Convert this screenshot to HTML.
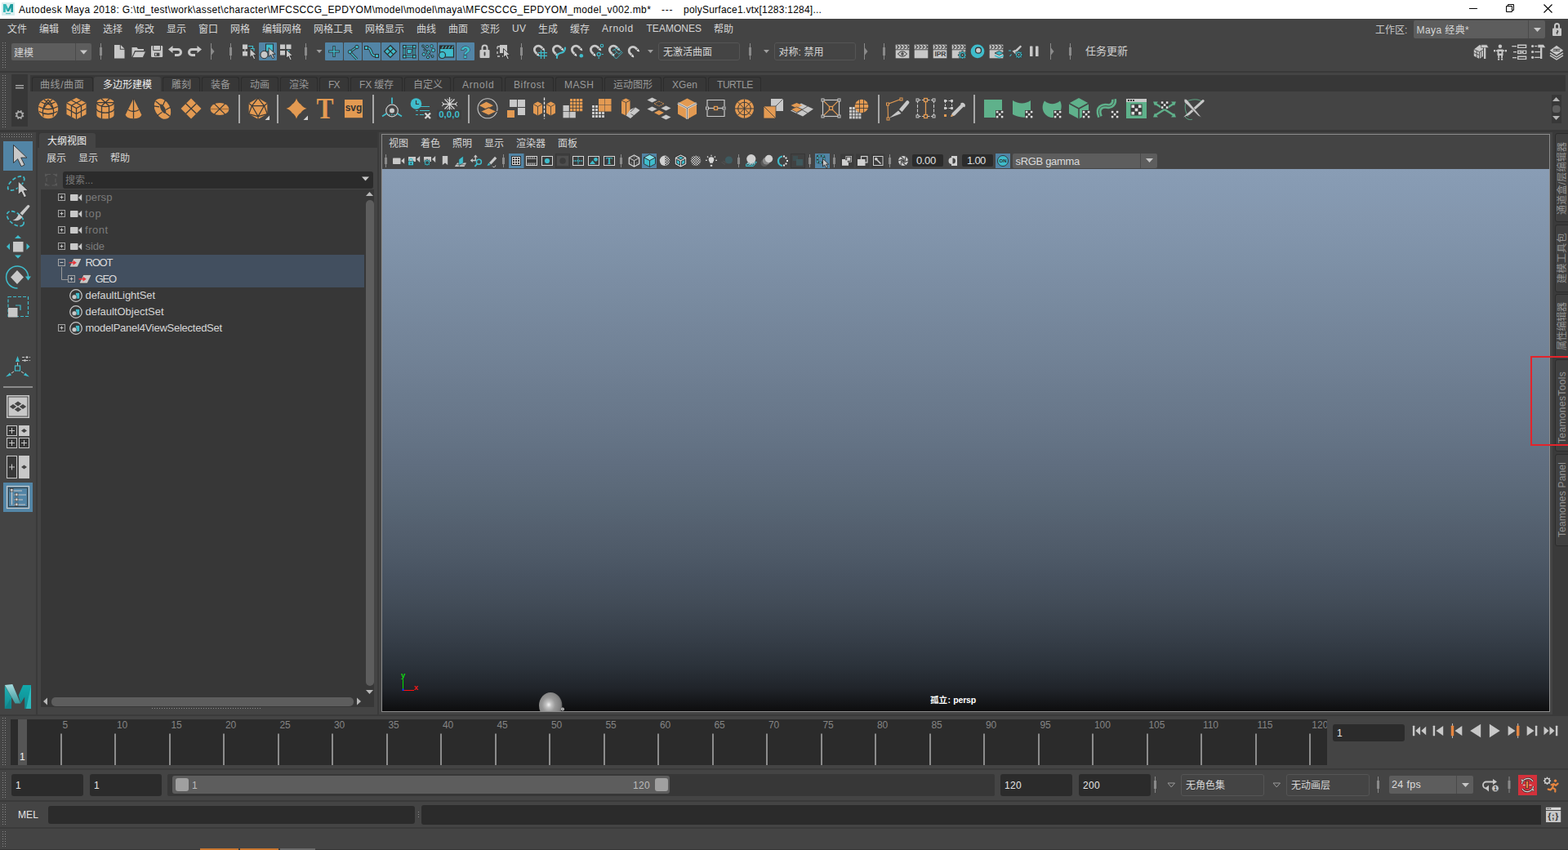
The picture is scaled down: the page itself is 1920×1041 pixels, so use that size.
<!DOCTYPE html>
<html lang="zh-CN"><head><meta charset="utf-8"><title>Autodesk Maya 2018</title>
<style>
html,body{margin:0;padding:0;}
body{width:1920px;height:1041px;overflow:hidden;position:relative;background:#444;font-family:"Liberation Sans","Noto Sans CJK SC",sans-serif;font-size:12px;color:#ddd;}
#ui div{position:absolute;white-space:nowrap;box-sizing:border-box;}
#ui{position:absolute;left:0;top:0;width:1920px;height:1041px;overflow:hidden;}
#ov{position:absolute;left:0;top:0;width:1920px;height:1041px;pointer-events:none;}
#ov text{font-family:"Liberation Sans","Noto Sans CJK SC",sans-serif;}
</style></head><body>
<div id="ui">
<div style="left:0px;top:0px;width:1920px;height:23px;background:#ffffff;"></div>
<div style="left:23px;top:3px;height:18px;line-height:18px;font-size:12px;font-weight:normal;color:#000;letter-spacing:0.371px;">Autodesk Maya 2018: G:\td_test\work\asset\character\MFCSCCG_EPDYOM\model\model\maya\MFCSCCG_EPDYOM_model_v002.mb*</div>
<div style="left:810px;top:3px;height:18px;line-height:18px;font-size:12px;font-weight:normal;color:#000;letter-spacing:0.800px;">---</div>
<div style="left:837px;top:3px;height:18px;line-height:18px;font-size:12px;font-weight:normal;color:#000;letter-spacing:0.234px;">polySurface1.vtx[1283:1284]...</div>
<div style="left:0px;top:23px;width:1920px;height:23px;background:#444444;"></div>
<div style="left:9px;top:27px;height:18px;line-height:18px;font-size:12px;color:#d6d6d6;">文件</div>
<div style="left:48px;top:27px;height:18px;line-height:18px;font-size:12px;color:#d6d6d6;">编辑</div>
<div style="left:87px;top:27px;height:18px;line-height:18px;font-size:12px;color:#d6d6d6;">创建</div>
<div style="left:126px;top:27px;height:18px;line-height:18px;font-size:12px;color:#d6d6d6;">选择</div>
<div style="left:165px;top:27px;height:18px;line-height:18px;font-size:12px;color:#d6d6d6;">修改</div>
<div style="left:204px;top:27px;height:18px;line-height:18px;font-size:12px;color:#d6d6d6;">显示</div>
<div style="left:243px;top:27px;height:18px;line-height:18px;font-size:12px;color:#d6d6d6;">窗口</div>
<div style="left:282px;top:27px;height:18px;line-height:18px;font-size:12px;color:#d6d6d6;">网格</div>
<div style="left:321px;top:27px;height:18px;line-height:18px;font-size:12px;color:#d6d6d6;">编辑网格</div>
<div style="left:384px;top:27px;height:18px;line-height:18px;font-size:12px;color:#d6d6d6;">网格工具</div>
<div style="left:447px;top:27px;height:18px;line-height:18px;font-size:12px;color:#d6d6d6;">网格显示</div>
<div style="left:510px;top:27px;height:18px;line-height:18px;font-size:12px;color:#d6d6d6;">曲线</div>
<div style="left:549px;top:27px;height:18px;line-height:18px;font-size:12px;color:#d6d6d6;">曲面</div>
<div style="left:588px;top:27px;height:18px;line-height:18px;font-size:12px;color:#d6d6d6;">变形</div>
<div style="left:627px;top:26px;height:18px;line-height:18px;font-size:12px;font-weight:normal;color:#d6d6d6;letter-spacing:0.219px;">UV</div>
<div style="left:659px;top:27px;height:18px;line-height:18px;font-size:12px;color:#d6d6d6;">生成</div>
<div style="left:698px;top:27px;height:18px;line-height:18px;font-size:12px;color:#d6d6d6;">缓存</div>
<div style="left:737px;top:26px;height:18px;line-height:18px;font-size:12px;font-weight:normal;color:#d6d6d6;letter-spacing:0.693px;">Arnold</div>
<div style="left:791.5px;top:26px;height:18px;line-height:18px;font-size:12px;font-weight:normal;color:#d6d6d6;letter-spacing:0.021px;">TEAMONES</div>
<div style="left:874px;top:27px;height:18px;line-height:18px;font-size:12px;color:#d6d6d6;">帮助</div>
<div style="left:1684px;top:28px;height:18px;line-height:18px;font-size:12px;color:#c8c8c8;">工作区:</div>
<div style="left:1731px;top:25px;width:161px;height:22px;background:#5d5d5d;border-radius:2px;"></div>
<div style="left:1871px;top:25px;width:1px;height:22px;background:#4a4a4a;"></div>
<div style="left:1734.5px;top:28px;height:18px;line-height:18px;font-size:12px;font-weight:normal;color:#d6d6d6;letter-spacing:0.419px;">Maya 经典*</div>
<div style="left:0px;top:87px;width:1920px;height:2px;background:#383838;"></div>
<div style="left:0px;top:159px;width:1920px;height:3px;background:#383838;"></div>
<div style="left:0px;top:875px;width:1920px;height:2px;background:#3a3a3a;"></div>
<div style="left:467px;top:164px;width:1431px;height:708px;background:#444;border:1px solid #8c8c8c;"></div>
<div style="left:468px;top:207px;width:1429px;height:664px;background:#000;background:linear-gradient(to bottom,rgb(137,157,181) 0.00%,rgb(134,154,178) 4.17%,rgb(132,151,174) 8.33%,rgb(129,148,171) 12.50%,rgb(126,145,167) 16.67%,rgb(123,141,163) 20.83%,rgb(120,138,159) 25.00%,rgb(117,134,155) 29.17%,rgb(114,131,151) 33.33%,rgb(111,127,147) 37.50%,rgb(107,123,142) 41.67%,rgb(104,119,138) 45.83%,rgb(100,115,133) 50.00%,rgb(96,110,128) 54.17%,rgb(92,106,122) 58.33%,rgb(87,101,116) 62.50%,rgb(83,95,110) 66.67%,rgb(78,90,104) 70.83%,rgb(72,83,97) 75.00%,rgb(67,77,89) 79.17%,rgb(60,69,80) 83.33%,rgb(52,60,70) 87.50%,rgb(43,50,58) 91.67%,rgb(32,36,42) 95.83%,rgb(13,13,14) 100.00%);"></div>
<div style="left:14px;top:53px;width:98px;height:21px;background:#5d5d5d;border-radius:2px;"></div>
<div style="left:92px;top:53px;width:1px;height:21px;background:#4a4a4a;"></div>
<div style="left:17px;top:56px;height:18px;line-height:18px;font-size:12px;color:#d2d2d2;">建模</div>
<div style="left:806px;top:52px;width:100px;height:22px;background:#444;border:1px solid #555;border-radius:3px;"></div>
<div style="left:812px;top:55px;height:18px;line-height:18px;font-size:12px;color:#d6d6d6;">无激活曲面</div>
<div style="left:948px;top:52px;width:100px;height:22px;background:#444;border:1px solid #555;border-radius:3px;"></div>
<div style="left:953.5px;top:55px;height:18px;line-height:18px;font-size:12px;font-weight:normal;color:#d6d6d6;letter-spacing:0.060px;">对称: 禁用</div>
<div style="left:1329px;top:54px;height:18px;line-height:18px;font-size:13px;color:#d0d0d0;">任务更新</div>
<div style="left:14px;top:91px;width:20px;height:64px;background:#373737;"></div>
<div style="left:37px;top:92px;width:1880px;height:20px;background:#373737;"></div>
<div style="left:39px;top:94px;width:75px;height:18px;background:#373737;border:1px solid #2c2c2c;border-bottom:none;border-radius:3px 3px 0 0;"></div>
<div style="left:115px;top:94px;width:82px;height:18px;background:#444444;border-radius:3px 3px 0 0;"></div>
<div style="left:199px;top:94px;width:46px;height:18px;background:#373737;border:1px solid #2c2c2c;border-bottom:none;border-radius:3px 3px 0 0;"></div>
<div style="left:247px;top:94px;width:46px;height:18px;background:#373737;border:1px solid #2c2c2c;border-bottom:none;border-radius:3px 3px 0 0;"></div>
<div style="left:295px;top:94px;width:46px;height:18px;background:#373737;border:1px solid #2c2c2c;border-bottom:none;border-radius:3px 3px 0 0;"></div>
<div style="left:343px;top:94px;width:46px;height:18px;background:#373737;border:1px solid #2c2c2c;border-bottom:none;border-radius:3px 3px 0 0;"></div>
<div style="left:391px;top:94px;width:36px;height:18px;background:#373737;border:1px solid #2c2c2c;border-bottom:none;border-radius:3px 3px 0 0;"></div>
<div style="left:429px;top:94px;width:64px;height:18px;background:#373737;border:1px solid #2c2c2c;border-bottom:none;border-radius:3px 3px 0 0;"></div>
<div style="left:495px;top:94px;width:57px;height:18px;background:#373737;border:1px solid #2c2c2c;border-bottom:none;border-radius:3px 3px 0 0;"></div>
<div style="left:555px;top:94px;width:60px;height:18px;background:#373737;border:1px solid #2c2c2c;border-bottom:none;border-radius:3px 3px 0 0;"></div>
<div style="left:618px;top:94px;width:60px;height:18px;background:#373737;border:1px solid #2c2c2c;border-bottom:none;border-radius:3px 3px 0 0;"></div>
<div style="left:680px;top:94px;width:58px;height:18px;background:#373737;border:1px solid #2c2c2c;border-bottom:none;border-radius:3px 3px 0 0;"></div>
<div style="left:740px;top:94px;width:70px;height:18px;background:#373737;border:1px solid #2c2c2c;border-bottom:none;border-radius:3px 3px 0 0;"></div>
<div style="left:812px;top:94px;width:53px;height:18px;background:#373737;border:1px solid #2c2c2c;border-bottom:none;border-radius:3px 3px 0 0;"></div>
<div style="left:867px;top:94px;width:65px;height:18px;background:#373737;border:1px solid #2c2c2c;border-bottom:none;border-radius:3px 3px 0 0;"></div>
<div style="left:49px;top:95px;height:18px;line-height:18px;font-size:12px;font-weight:normal;color:#9a9a9a;letter-spacing:0.590px;">曲线/曲面</div>
<div style="left:126px;top:95px;height:18px;line-height:18px;font-size:12px;font-weight:normal;color:#eeeeee;letter-spacing:-0.003px;">多边形建模</div>
<div style="left:210px;top:95px;height:18px;line-height:18px;font-size:12px;font-weight:normal;color:#9a9a9a;letter-spacing:-0.010px;">雕刻</div>
<div style="left:258px;top:95px;height:18px;line-height:18px;font-size:12px;font-weight:normal;color:#9a9a9a;letter-spacing:-0.010px;">装备</div>
<div style="left:306px;top:95px;height:18px;line-height:18px;font-size:12px;font-weight:normal;color:#9a9a9a;letter-spacing:-0.010px;">动画</div>
<div style="left:354px;top:95px;height:18px;line-height:18px;font-size:12px;font-weight:normal;color:#9a9a9a;letter-spacing:-0.010px;">渲染</div>
<div style="left:402px;top:95px;height:18px;line-height:18px;font-size:12px;font-weight:normal;color:#9a9a9a;letter-spacing:-0.896px;">FX</div>
<div style="left:440px;top:95px;height:18px;line-height:18px;font-size:12px;font-weight:normal;color:#9a9a9a;letter-spacing:-0.149px;">FX 缓存</div>
<div style="left:506px;top:95px;height:18px;line-height:18px;font-size:12px;font-weight:normal;color:#9a9a9a;letter-spacing:-0.006px;">自定义</div>
<div style="left:566px;top:95px;height:18px;line-height:18px;font-size:12px;font-weight:normal;color:#9a9a9a;letter-spacing:0.784px;">Arnold</div>
<div style="left:629px;top:95px;height:18px;line-height:18px;font-size:12px;font-weight:normal;color:#9a9a9a;letter-spacing:0.613px;">Bifrost</div>
<div style="left:691px;top:95px;height:18px;line-height:18px;font-size:12px;font-weight:normal;color:#9a9a9a;letter-spacing:0.379px;">MASH</div>
<div style="left:751px;top:95px;height:18px;line-height:18px;font-size:12px;font-weight:normal;color:#9a9a9a;letter-spacing:-0.004px;">运动图形</div>
<div style="left:823px;top:95px;height:18px;line-height:18px;font-size:12px;font-weight:normal;color:#9a9a9a;letter-spacing:0.089px;">XGen</div>
<div style="left:878px;top:95px;height:18px;line-height:18px;font-size:12px;font-weight:normal;color:#9a9a9a;letter-spacing:-0.446px;">TURTLE</div>
<div style="left:1900px;top:116px;width:12px;height:35px;background:#383838;"></div>
<div style="left:44px;top:162px;width:2px;height:714px;background:#3a3a3a;"></div>
<div style="left:46px;top:162px;width:416px;height:19px;background:#373737;"></div>
<div style="left:48px;top:163px;width:69px;height:18px;background:#444444;border-radius:3px 3px 0 0;"></div>
<div style="left:58px;top:165px;height:16px;line-height:16px;font-size:12px;color:#eeeeee;">大纲视图</div>
<div style="left:57px;top:186px;height:17px;line-height:17px;font-size:12px;color:#d6d6d6;">展示</div>
<div style="left:96px;top:186px;height:17px;line-height:17px;font-size:12px;color:#d6d6d6;">显示</div>
<div style="left:135px;top:186px;height:17px;line-height:17px;font-size:12px;color:#d6d6d6;">帮助</div>
<div style="left:77px;top:210px;width:380px;height:21px;background:#2b2b2b;border-radius:3px;"></div>
<div style="left:80px;top:212px;height:18px;line-height:18px;font-size:12px;color:#7a7a7a;">搜索...</div>
<div style="left:50px;top:232px;width:408px;height:634px;background:#373737;"></div>
<div style="left:50px;top:312px;width:396px;height:40px;background:#424f5f;"></div>
<div style="left:104.5px;top:232px;height:20px;line-height:20px;font-size:13px;font-weight:normal;color:#7b7b7b;letter-spacing:0.104px;">persp</div>
<div style="left:104px;top:252px;height:20px;line-height:20px;font-size:13px;font-weight:normal;color:#7b7b7b;letter-spacing:0.769px;">top</div>
<div style="left:104px;top:272px;height:20px;line-height:20px;font-size:13px;font-weight:normal;color:#7b7b7b;letter-spacing:0.552px;">front</div>
<div style="left:104.5px;top:292px;height:20px;line-height:20px;font-size:13px;font-weight:normal;color:#7b7b7b;letter-spacing:-0.103px;">side</div>
<div style="left:104.5px;top:312px;height:20px;line-height:20px;font-size:13px;font-weight:normal;color:#dcdcdc;letter-spacing:-1.200px;">ROOT</div>
<div style="left:116.5px;top:332px;height:20px;line-height:20px;font-size:13px;font-weight:normal;color:#dcdcdc;letter-spacing:-1.200px;">GEO</div>
<div style="left:104.5px;top:352px;height:20px;line-height:20px;font-size:13px;font-weight:normal;color:#d6d6d6;letter-spacing:-0.085px;">defaultLightSet</div>
<div style="left:104.5px;top:372px;height:20px;line-height:20px;font-size:13px;font-weight:normal;color:#d6d6d6;letter-spacing:-0.008px;">defaultObjectSet</div>
<div style="left:104.5px;top:392px;height:20px;line-height:20px;font-size:13px;font-weight:normal;color:#d6d6d6;letter-spacing:-0.252px;">modelPanel4ViewSelectedSet</div>
<div style="left:448px;top:245px;width:10px;height:595px;background:#5d5d5d;border-radius:5px;"></div>
<div style="left:63px;top:854px;width:370px;height:11px;background:#5d5d5d;border-radius:5px;"></div>
<div style="left:462px;top:162px;width:2px;height:714px;background:#3a3a3a;"></div>
<div style="left:476px;top:168px;height:17px;line-height:17px;font-size:12px;color:#d6d6d6;">视图</div>
<div style="left:515px;top:168px;height:17px;line-height:17px;font-size:12px;color:#d6d6d6;">着色</div>
<div style="left:554px;top:168px;height:17px;line-height:17px;font-size:12px;color:#d6d6d6;">照明</div>
<div style="left:593px;top:168px;height:17px;line-height:17px;font-size:12px;color:#d6d6d6;">显示</div>
<div style="left:632px;top:168px;height:17px;line-height:17px;font-size:12px;color:#d6d6d6;">渲染器</div>
<div style="left:683px;top:168px;height:17px;line-height:17px;font-size:12px;color:#d6d6d6;">面板</div>
<div style="left:1117px;top:189px;width:38px;height:15px;background:#2b2b2b;border-radius:2px;"></div>
<div style="left:1122px;top:188px;height:17px;line-height:17px;font-size:13px;font-weight:normal;color:#e0e0e0;letter-spacing:-0.375px;">0.00</div>
<div style="left:1178px;top:189px;width:38px;height:15px;background:#2b2b2b;border-radius:2px;"></div>
<div style="left:1184px;top:188px;height:17px;line-height:17px;font-size:13px;font-weight:normal;color:#e0e0e0;letter-spacing:-0.661px;">1.00</div>
<div style="left:1240px;top:188px;width:177px;height:18px;background:#5d5d5d;border-radius:2px;"></div>
<div style="left:1396px;top:188px;width:1px;height:18px;background:#4a4a4a;"></div>
<div style="left:1243.5px;top:189px;height:18px;line-height:18px;font-size:13px;font-weight:normal;color:#dcdcdc;letter-spacing:-0.331px;">sRGB gamma</div>
<div style="left:1901px;top:162px;width:19px;height:714px;background:#3a3a3a;"></div>
<div style="left:1904px;top:163px;width:18px;height:109px;background:#404040;border:1px solid #2c2c2c;border-radius:3px 0 0 3px;"></div>
<div style="left:1906px;top:262.5px;height:15px;line-height:15px;font-size:12px;color:#929292;letter-spacing:0.221px;transform-origin:0 0;transform:rotate(-90deg);">通道盒/层编辑器</div>
<div style="left:1904px;top:275px;width:18px;height:83px;background:#404040;border:1px solid #2c2c2c;border-radius:3px 0 0 3px;"></div>
<div style="left:1906px;top:347px;height:15px;line-height:15px;font-size:12px;color:#929292;letter-spacing:0.441px;transform-origin:0 0;transform:rotate(-90deg);">建模工具包</div>
<div style="left:1904px;top:360px;width:18px;height:78px;background:#404040;border:1px solid #2c2c2c;border-radius:3px 0 0 3px;"></div>
<div style="left:1906px;top:429px;height:15px;line-height:15px;font-size:12px;color:#929292;letter-spacing:-0.226px;transform-origin:0 0;transform:rotate(-90deg);">属性编辑器</div>
<div style="left:1904px;top:440px;width:18px;height:113px;background:#404040;border:1px solid #2c2c2c;border-radius:3px 0 0 3px;"></div>
<div style="left:1906px;top:542.5px;height:15px;line-height:15px;font-size:12px;color:#929292;letter-spacing:0.369px;transform-origin:0 0;transform:rotate(-90deg);">TeamonesTools</div>
<div style="left:1904px;top:556px;width:18px;height:113px;background:#404040;border:1px solid #2c2c2c;border-radius:3px 0 0 3px;"></div>
<div style="left:1906px;top:658px;height:15px;line-height:15px;font-size:12px;color:#929292;letter-spacing:0.193px;transform-origin:0 0;transform:rotate(-90deg);">Teamones Panel</div>
<div style="left:1874px;top:436px;width:60px;height:110px;background:transparent;border:2px solid #e3242b;"></div>
<div style="left:0px;top:941px;width:1920px;height:2px;background:#3a3a3a;"></div>
<div style="left:0px;top:980px;width:1920px;height:2px;background:#3a3a3a;"></div>
<div style="left:0px;top:1013px;width:1920px;height:2px;background:#3a3a3a;"></div>
<div style="left:0px;top:1040px;width:1920px;height:1px;background:#363636;"></div>
<div style="left:13px;top:881px;width:1612px;height:56px;background:#2b2b2b;overflow:hidden;"></div>
<div style="left:22px;top:881px;width:11px;height:56px;background:#555555;"></div>
<div style="left:24px;top:919px;height:16px;line-height:16px;font-size:12px;color:#f0f0f0;">1</div>
<div style="left:1632px;top:887px;width:88px;height:21px;background:#2b2b2b;border-radius:3px;"></div>
<div style="left:1637px;top:889px;height:18px;line-height:18px;font-size:12px;color:#e6e6e6;">1</div>
<div style="left:14px;top:948px;width:88px;height:27px;background:#2b2b2b;border-radius:3px;"></div>
<div style="left:110px;top:948px;width:88px;height:27px;background:#2b2b2b;border-radius:3px;"></div>
<div style="left:19px;top:953px;height:18px;line-height:18px;font-size:12px;color:#e6e6e6;">1</div>
<div style="left:115px;top:953px;height:18px;line-height:18px;font-size:12px;color:#e6e6e6;">1</div>
<div style="left:205px;top:948px;width:1013px;height:27px;background:#373737;border-radius:2px;"></div>
<div style="left:211px;top:950px;width:609px;height:22px;background:#5d5d5d;border-radius:3px;"></div>
<div style="left:215px;top:953px;width:16px;height:16px;background:#a0a0a0;border-radius:3px;"></div>
<div style="left:802px;top:953px;width:16px;height:16px;background:#a0a0a0;border-radius:3px;"></div>
<div style="left:235px;top:953px;height:18px;line-height:18px;font-size:12px;color:#bcbcbc;">1</div>
<div style="left:775px;top:953px;height:18px;line-height:18px;font-size:12px;font-weight:normal;color:#bcbcbc;letter-spacing:0.388px;">120</div>
<div style="left:1225px;top:948px;width:88px;height:27px;background:#2b2b2b;border-radius:3px;"></div>
<div style="left:1321px;top:948px;width:88px;height:27px;background:#2b2b2b;border-radius:3px;"></div>
<div style="left:1230px;top:953px;height:18px;line-height:18px;font-size:12px;font-weight:normal;color:#e6e6e6;letter-spacing:0.388px;">120</div>
<div style="left:1326px;top:953px;height:18px;line-height:18px;font-size:12px;font-weight:normal;color:#e6e6e6;letter-spacing:0.388px;">200</div>
<div style="left:1446px;top:948px;width:102px;height:27px;background:#444;border:1px solid #555;border-radius:3px;"></div>
<div style="left:1452px;top:953px;height:18px;line-height:18px;font-size:12px;color:#d6d6d6;">无角色集</div>
<div style="left:1575px;top:948px;width:102px;height:27px;background:#444;border:1px solid #555;border-radius:3px;"></div>
<div style="left:1581px;top:953px;height:18px;line-height:18px;font-size:12px;color:#d6d6d6;">无动画层</div>
<div style="left:1701px;top:950px;width:103px;height:22px;background:#5d5d5d;border-radius:2px;"></div>
<div style="left:1783px;top:950px;width:1px;height:22px;background:#4a4a4a;"></div>
<div style="left:1704px;top:952px;height:18px;line-height:18px;font-size:12.5px;font-weight:normal;color:#dcdcdc;letter-spacing:0.352px;">24 fps</div>
<div style="left:22px;top:989px;height:18px;line-height:18px;font-size:12px;font-weight:normal;color:#e6e6e6;letter-spacing:0.125px;">MEL</div>
<div style="left:59px;top:987px;width:449px;height:22px;background:#2b2b2b;border-radius:3px;"></div>
<div style="left:516px;top:986px;width:1371px;height:24px;background:#2b2b2b;border-radius:3px 0 0 3px;"></div>
<div style="left:245px;top:1039px;width:47px;height:2px;background:#c8762f;"></div>
<div style="left:294px;top:1039px;width:47px;height:2px;background:#c8762f;"></div>
<div style="left:343px;top:1039px;width:43px;height:2px;background:#6a6a6a;"></div>
</div>
<svg id="ov" width="1920" height="1041" viewBox="0 0 1920 1041">
<g transform="translate(2,3)"><rect x="0" y="0" width="16" height="16" fill="#d9eeee"/><path d="M2 2h3.2l2.8 6 2.8-6H14v10h-2.6V6.2L9 11H7L4.6 6.2V12H2z" fill="#1a9a9c"/><path d="M2 2h3.2l2.8 6L7 11 4.6 6.2V12H2z" fill="#3cc0c0" opacity=".75"/><rect x="5" y="13" width="6" height="1.2" fill="#5ec4c4"/></g>
<rect x="1799" y="10" width="10" height="1" fill="#000" />
<path d="M1844.5 7.5h7v7h-7z M1846.5 7.5v-2h7v7h-2" fill="none" stroke="#000" stroke-width="1" />
<path d="M1890.5 5.500l10 10M1900.5 5.500l-10 10" fill="none" stroke="#000" stroke-width="1.1" />
<path d="M1878.0 34.0h9l-4.5 5z" fill="#c8c8c8" stroke="none" stroke-width="1" />
<g fill="#c8c8c8"><path d="M1903 35v-3.500a3.500 3.500 0 0 1 7 0V35h-2v-3.400a1.500 1.500 0 0 0-3 0V35z"/><rect x="1901" y="34.500" width="11" height="9.500" rx="1"/></g><path d="M1906.500 37.500a1.100 1.100 0 1 1 0 2.200v1.800h-0.010" stroke="#444" stroke-width="1.600" fill="none"/>
<g fill="#8a8a8a">
<rect x="3" y="52" width="1" height="1"/><rect x="6" y="52" width="1" height="1"/>
<rect x="3" y="55" width="1" height="1"/><rect x="6" y="55" width="1" height="1"/>
<rect x="3" y="58" width="1" height="1"/><rect x="6" y="58" width="1" height="1"/>
<rect x="3" y="61" width="1" height="1"/><rect x="6" y="61" width="1" height="1"/>
<rect x="3" y="64" width="1" height="1"/><rect x="6" y="64" width="1" height="1"/>
<rect x="3" y="67" width="1" height="1"/><rect x="6" y="67" width="1" height="1"/>
<rect x="3" y="70" width="1" height="1"/><rect x="6" y="70" width="1" height="1"/>
<rect x="3" y="73" width="1" height="1"/><rect x="6" y="73" width="1" height="1"/>
<rect x="3" y="76" width="1" height="1"/><rect x="6" y="76" width="1" height="1"/>
<rect x="3" y="79" width="1" height="1"/><rect x="6" y="79" width="1" height="1"/>
<rect x="3" y="82" width="1" height="1"/><rect x="6" y="82" width="1" height="1"/>
</g>
<path d="M98.0 61.5h9l-4.5 5z" fill="#c8c8c8" stroke="none" stroke-width="1" />
<rect x="123.0" y="53" width="1" height="20" fill="#8a8a8a" />
<rect x="122.0" y="58" width="3" height="10" fill="#8a8a8a" />
<path d="M140 55h6.800v5.700h5.700v10.800h-12.500z" fill="#c8c8c8" stroke="none" stroke-width="1" />
<path d="M147.800 55l4.700 4.700h-4.700z" fill="#c8c8c8" stroke="none" stroke-width="1" />
<path d="M161.500 58h6l1.500 2h7v2h-11l-3.500 8z" fill="#c8c8c8" stroke="none" stroke-width="1" />
<path d="M165.500 63h13l-3.500 7.500h-13z" fill="#c8c8c8" stroke="#444" stroke-width="0.8" />
<rect x="185" y="56" width="14.2" height="14" fill="#c8c8c8" rx="1.200"/>
<path d="M187.700 56v5.600h8.800v-5.600" fill="none" stroke="#444" stroke-width="1" />
<rect x="189" y="64.7" width="6.4" height="4.1" fill="#444" />
<rect x="190" y="65.5" width="1.6" height="2.5" fill="#c8c8c8" />
<path d="M206 60.500l5.500-4.500v3h6.500a5 5 0 0 1 0 10h-4v-3h4a2 2 0 0 0 0-4h-6.500v3z" fill="#c8c8c8" stroke="none" stroke-width="1" />
<path d="M247 60.500l-5.500-4.500v3h-6.500a5 5 0 0 0 0 10h4v-3h-4a2 2 0 0 1 0-4h6.500v3z" fill="#c8c8c8" stroke="none" stroke-width="1" />
<rect x="258.0" y="53" width="1" height="20" fill="#8a8a8a" />
<path d="M258.5 58l4 5.0l-4 5.0z" fill="#8a8a8a" stroke="none" stroke-width="1" />
<rect x="282.0" y="53" width="1" height="20" fill="#8a8a8a" />
<rect x="281.0" y="58" width="3" height="10" fill="#8a8a8a" />
<rect x="297" y="54.5" width="6" height="5.5" fill="#c8c8c8" />
<rect x="297" y="63" width="6" height="5.5" fill="#c8c8c8" />
<rect x="299.5" y="60" width="1" height="3" fill="#c8c8c8" />
<path d="M304 56.500h5.500v3M306.500 59.500h4.500v3" fill="none" stroke="#3fbccb" stroke-width="1.2" />
<path d="M306 59.5l0 11.0 2.6 -2.4 2.2 4.6 2.0 -1.0 -2.2 -4.4 3.6 0z" fill="#c8c8c8" stroke="#2e2e2e" stroke-width="0.9" stroke-linejoin="round"/>
<rect x="317" y="52" width="22" height="22" fill="#5285a6" rx="1"/>
<rect x="325.5" y="54" width="9" height="9" fill="#3fbccb" stroke="#2e2e2e" stroke-width="1"/>
<circle cx="323.5" cy="67" r="4.6" fill="#c8c8c8" stroke="#2e2e2e" stroke-width="1" />
<path d="M329 58.5l0 11.0 2.6 -2.4 2.2 4.6 2.0 -1.0 -2.2 -4.4 3.6 0z" fill="#c8c8c8" stroke="#2e2e2e" stroke-width="0.9" stroke-linejoin="round"/>
<rect x="343" y="54.5" width="6" height="5.5" fill="#c8c8c8" />
<rect x="350.5" y="54.5" width="6" height="5.5" fill="#c8c8c8" />
<rect x="343" y="62" width="6" height="5.5" fill="#c8c8c8" />
<path d="M350.500 62h3v5" fill="none" stroke="#3fbccb" stroke-width="1.6" />
<path d="M350.5 60.5l0 11.0 2.6 -2.4 2.2 4.6 2.0 -1.0 -2.2 -4.4 3.6 0z" fill="#c8c8c8" stroke="#2e2e2e" stroke-width="0.9" stroke-linejoin="round"/>
<rect x="374.0" y="53" width="1" height="20" fill="#8a8a8a" />
<rect x="373.0" y="58" width="3" height="10" fill="#8a8a8a" />
<path d="M387.5 61.0h7l-3.5 4z" fill="#a0a0a0" stroke="none" stroke-width="1" />
<rect x="398" y="52" width="22" height="22" fill="#5285a6" rx="1"/>
<rect x="421" y="52" width="22" height="22" fill="#5285a6" rx="1"/>
<rect x="444" y="52" width="22" height="22" fill="#5285a6" rx="1"/>
<rect x="467" y="52" width="22" height="22" fill="#5285a6" rx="1"/>
<rect x="490" y="52" width="22" height="22" fill="#5285a6" rx="1"/>
<rect x="513" y="52" width="22" height="22" fill="#5285a6" rx="1"/>
<rect x="536" y="52" width="22" height="22" fill="#5285a6" rx="1"/>
<rect x="559" y="52" width="22" height="22" fill="#5285a6" rx="1"/>
<path d="M409 56v14M402 63h14" fill="none" stroke="#2e2e2e" stroke-width="3.2" />
<path d="M409 56.700v12.600M402.700 63h12.600" fill="none" stroke="#3fbccb" stroke-width="1.5" />
<path d="M437 57.500l-8.500 6 8.500 9" fill="none" stroke="#2e2e2e" stroke-width="3.2" stroke-linejoin="round"/>
<path d="M437 57.500l-8.500 6 8.500 9" fill="none" stroke="#3fbccb" stroke-width="1.5" />
<circle cx="437" cy="57.5" r="2.2" fill="#3fbccb" stroke="#2e2e2e" stroke-width="1" />
<circle cx="428.5" cy="63.5" r="2.2" fill="#3fbccb" stroke="#2e2e2e" stroke-width="1" />
<path d="M449 58.500c8 0 3 10 11 10" fill="none" stroke="#2e2e2e" stroke-width="3.6" />
<path d="M449 58.500c8 0 3 10 11 10" fill="none" stroke="#3fbccb" stroke-width="1.8" />
<rect x="446.5" y="56.5" width="4" height="4" fill="#3fbccb" stroke="#2e2e2e"/>
<rect x="459.5" y="66.5" width="4" height="4" fill="#3fbccb" stroke="#2e2e2e"/>
<path d="M478 55.500l7.500 7.500-7.500 7.500-7.500-7.500z" fill="#3fbccb" stroke="#2e2e2e" stroke-width="1.2" />
<path d="M474.250 59.250l7.500 7.500M481.750 59.250l-7.500 7.500" fill="none" stroke="#2e2e2e" stroke-width="1.1" />
<path d="M495 57h12v12h-12z" fill="none" stroke="#2e2e2e" stroke-width="3.2" />
<path d="M495 57h12v12h-12z" fill="none" stroke="#3fbccb" stroke-width="1.3" />
<path d="M498.500 60.500h6l-1 5h-5z" fill="#3fbccb" stroke="#2e2e2e" stroke-width="0.8" />
<rect x="493.5" y="55.5" width="3.5" height="3.5" fill="#3fbccb" stroke="#2e2e2e"/>
<rect x="505.5" y="55.5" width="3.5" height="3.5" fill="#3fbccb" stroke="#2e2e2e"/>
<rect x="493.5" y="67.5" width="3.5" height="3.5" fill="#3fbccb" stroke="#2e2e2e"/>
<rect x="505.5" y="67.5" width="3.5" height="3.5" fill="#3fbccb" stroke="#2e2e2e"/>
<circle cx="518" cy="56.5" r="1.5" fill="#3fbccb" stroke="#2e2e2e" stroke-width="0.9" />
<circle cx="523" cy="57" r="1.6" fill="#3fbccb" stroke="#2e2e2e" stroke-width="0.9" />
<circle cx="528.5" cy="56.5" r="1.8" fill="#3fbccb" stroke="#2e2e2e" stroke-width="0.9" />
<circle cx="530.5" cy="61.5" r="2.2" fill="#3fbccb" stroke="#2e2e2e" stroke-width="0.9" />
<circle cx="524.5" cy="64" r="2.4" fill="#3fbccb" stroke="#2e2e2e" stroke-width="0.9" />
<circle cx="519" cy="66.5" r="2" fill="#3fbccb" stroke="#2e2e2e" stroke-width="0.9" />
<circle cx="524" cy="70" r="1.7" fill="#3fbccb" stroke="#2e2e2e" stroke-width="0.9" />
<circle cx="529.5" cy="69" r="1.5" fill="#3fbccb" stroke="#2e2e2e" stroke-width="0.9" />
<circle cx="520" cy="61" r="1.2" fill="#3fbccb" stroke="#2e2e2e" stroke-width="0.9" />
<path d="M517 55.500l13 15" fill="none" stroke="#2e2e2e" stroke-width="0.8" />
<rect x="538.5" y="56" width="17" height="14" fill="#3fbccb" stroke="#2e2e2e" stroke-width="1.2"/>
<rect x="538.5" y="56" width="17" height="4" fill="#2e2e2e" />
<path d="M541 59.500l2-3M545 59.500l2-3M549 59.500l2-3M553 59.500l2-3" fill="none" stroke="#3fbccb" stroke-width="1.3" />
<circle cx="541.5" cy="67.5" r="4" fill="#3fbccb" stroke="#2e2e2e" stroke-width="1.2" />
<text x="570" y="70.500" font-size="20" font-weight="bold" fill="#3fbccb" stroke="#2e2e2e" stroke-width="0.900" paint-order="stroke" text-anchor="middle">?</text>
<g fill="#c8c8c8"><path d="M589.500 62v-3.500a4 4 0 0 1 8 0V62h-2v-3.400a2 2 0 0 0-4 0V62z"/><rect x="587.500" y="61" width="12" height="10" rx="1"/></g>
<path d="M593.500 64.500v3" fill="none" stroke="#444" stroke-width="1.8" stroke-linecap="round"/>
<path d="M609 57h4M609 57v3M609 63v3M609 69v0M609 69h3M615 69h3" fill="none" stroke="#c8c8c8" stroke-width="1.3" />
<rect x="612" y="55" width="9" height="10" fill="#c8c8c8" />
<path d="M616.5 59.5l0 11.0 2.6 -2.4 2.2 4.6 2.0 -1.0 -2.2 -4.4 3.6 0z" fill="#c8c8c8" stroke="#2e2e2e" stroke-width="0.9" stroke-linejoin="round"/>
<rect x="638.0" y="53" width="1" height="20" fill="#8a8a8a" />
<rect x="637.0" y="58" width="3" height="10" fill="#8a8a8a" />
<g transform="translate(659.2,60.9) rotate(-45)"><path d="M-4.800 4.600v-4.600a4.800 4.800 0 0 1 9.600 0v4.600" fill="none" stroke="#c8c8c8" stroke-width="2.800"/><path d="M-6.200 2.600h2.800M3.400 2.600h2.800" stroke="#444" stroke-width="0.900"/><path d="M-4.800 3.200v2.800M4.800 3.200v2.800" stroke="#e8e8e8" stroke-width="1.600"/></g>
<g transform="translate(682.2,60.9) rotate(-45)"><path d="M-4.800 4.600v-4.600a4.800 4.800 0 0 1 9.600 0v4.600" fill="none" stroke="#c8c8c8" stroke-width="2.800"/><path d="M-6.200 2.600h2.800M3.400 2.600h2.800" stroke="#444" stroke-width="0.900"/><path d="M-4.800 3.200v2.800M4.800 3.200v2.800" stroke="#e8e8e8" stroke-width="1.600"/></g>
<g transform="translate(705.2,60.9) rotate(-45)"><path d="M-4.800 4.600v-4.600a4.800 4.800 0 0 1 9.600 0v4.600" fill="none" stroke="#c8c8c8" stroke-width="2.800"/><path d="M-6.200 2.600h2.800M3.400 2.600h2.800" stroke="#444" stroke-width="0.900"/><path d="M-4.800 3.200v2.800M4.800 3.200v2.800" stroke="#e8e8e8" stroke-width="1.600"/></g>
<g transform="translate(728.2,60.9) rotate(-45)"><path d="M-4.800 4.600v-4.600a4.800 4.800 0 0 1 9.600 0v4.600" fill="none" stroke="#c8c8c8" stroke-width="2.800"/><path d="M-6.200 2.600h2.800M3.400 2.600h2.800" stroke="#444" stroke-width="0.900"/><path d="M-4.800 3.200v2.800M4.800 3.200v2.800" stroke="#e8e8e8" stroke-width="1.600"/></g>
<g transform="translate(751.2,60.9) rotate(-45)"><path d="M-4.800 4.600v-4.600a4.800 4.800 0 0 1 9.600 0v4.600" fill="none" stroke="#c8c8c8" stroke-width="2.800"/><path d="M-6.200 2.600h2.800M3.400 2.600h2.800" stroke="#444" stroke-width="0.900"/><path d="M-4.800 3.200v2.800M4.800 3.200v2.800" stroke="#e8e8e8" stroke-width="1.600"/></g>
<g transform="translate(775,62.2) rotate(-45)"><path d="M-4.800 4.600v-4.600a4.800 4.800 0 0 1 9.600 0v4.600" fill="none" stroke="#c8c8c8" stroke-width="2.800"/><path d="M-6.200 2.600h2.800M3.400 2.600h2.800" stroke="#444" stroke-width="0.900"/><path d="M-4.800 3.200v2.800M4.800 3.200v2.800" stroke="#e8e8e8" stroke-width="1.600"/></g>
<path d="M662.500 61.500v10.500M666.500 61.500v10.500M659 64.700h11M659 68.300h11" fill="none" stroke="#3fbccb" stroke-width="1.2" />
<path d="M692 58.500c0 5-3 6-6 6.500c-2 0.400-3 1-3.500 2.500" fill="none" stroke="#3fbccb" stroke-width="2.2" stroke-linecap="round"/>
<path d="M682 69v2" fill="none" stroke="#3fbccb" stroke-width="2" stroke-linecap="round"/>
<circle cx="711.8" cy="68.2" r="2.3" fill="#3fbccb" stroke="none" stroke-width="1" />
<circle cx="737" cy="56" r="1.7" fill="none" stroke="#3fbccb" stroke-width="1.1" />
<circle cx="733.2" cy="66.5" r="2.1" fill="none" stroke="#3fbccb" stroke-width="1.2" />
<path d="M733.200 69.800v2.200M736.800 66.500h2" fill="none" stroke="#3fbccb" stroke-width="1.1" />
<path d="M750 62l6-3.500 6 6-7.500 7.500-5-5M752.500 61l5 5M755 64l-3 3M757.500 66.500l3-3" fill="none" stroke="#3fbccb" stroke-width="0.9" />
<path d="M793.0 61.0h7l-3.5 4z" fill="#a0a0a0" stroke="none" stroke-width="1" />
<rect x="918.0" y="53" width="1" height="20" fill="#8a8a8a" />
<rect x="917.0" y="58" width="3" height="10" fill="#8a8a8a" />
<path d="M935.0 61.0h7l-3.5 4z" fill="#a0a0a0" stroke="none" stroke-width="1" />
<rect x="1058.0" y="53" width="1" height="20" fill="#8a8a8a" />
<path d="M1058.5 58l4 5.0l-4 5.0z" fill="#8a8a8a" stroke="none" stroke-width="1" />
<rect x="1082.0" y="53" width="1" height="20" fill="#8a8a8a" />
<rect x="1081.0" y="58" width="3" height="10" fill="#8a8a8a" />
<rect x="1096.7" y="61.3" width="16.6" height="10" fill="#c8c8c8" />
<rect x="1096.7" y="54.7" width="16.6" height="5.6" fill="#c8c8c8" />
<path d="M1098.2 55.600l2.400 1.900l-2.400 1.900M1102.3 55.600l2.400 1.900l-2.400 1.900M1106.4 55.600l2.400 1.900l-2.400 1.900M1110.5 55.600l2.400 1.900l-2.400 1.900" fill="none" stroke="#444" stroke-width="1.3" />
<rect x="1119.7" y="61.3" width="16.6" height="10" fill="#c8c8c8" />
<rect x="1119.7" y="54.7" width="16.6" height="5.6" fill="#c8c8c8" />
<path d="M1121.2 55.600l2.400 1.900l-2.400 1.900M1125.3 55.600l2.400 1.900l-2.400 1.900M1129.4 55.600l2.400 1.900l-2.400 1.900M1133.5 55.600l2.400 1.900l-2.400 1.900" fill="none" stroke="#444" stroke-width="1.3" />
<rect x="1142.7" y="61.3" width="16.6" height="10" fill="#c8c8c8" />
<rect x="1142.7" y="54.7" width="16.6" height="5.6" fill="#c8c8c8" />
<path d="M1144.2 55.600l2.400 1.900l-2.400 1.900M1148.3 55.600l2.400 1.900l-2.400 1.900M1152.4 55.600l2.400 1.900l-2.400 1.900M1156.5 55.600l2.400 1.900l-2.400 1.900" fill="none" stroke="#444" stroke-width="1.3" />
<rect x="1165.7" y="61.3" width="16.6" height="10" fill="#c8c8c8" />
<rect x="1165.7" y="54.7" width="16.6" height="5.6" fill="#c8c8c8" />
<path d="M1167.2 55.600l2.400 1.900l-2.400 1.900M1171.3 55.600l2.400 1.900l-2.400 1.900M1175.4 55.600l2.400 1.900l-2.400 1.900M1179.5 55.600l2.400 1.900l-2.400 1.900" fill="none" stroke="#444" stroke-width="1.3" />
<rect x="1211.7" y="61.3" width="16.6" height="10" fill="#c8c8c8" />
<rect x="1211.7" y="54.7" width="16.6" height="5.6" fill="#c8c8c8" />
<path d="M1213.2 55.600l2.400 1.900l-2.400 1.900M1217.3 55.600l2.400 1.900l-2.400 1.900M1221.4 55.600l2.400 1.900l-2.400 1.900M1225.5 55.600l2.400 1.900l-2.400 1.900" fill="none" stroke="#444" stroke-width="1.3" />
<path d="M1099.500 66c3-4 8-4 11 0c-3 4-8 4-11 0z" fill="#c8c8c8" stroke="#2e2e2e" stroke-width="1" />
<circle cx="1105" cy="66" r="1.7" fill="#2e2e2e" stroke="none" stroke-width="1" />
<circle cx="1105" cy="66" r="0.6" fill="#c8c8c8" stroke="none" stroke-width="1" />
<text x="1151.300" y="69.300" font-size="8.500" font-weight="bold" fill="#3a3a3a" text-anchor="middle" letter-spacing="-0.200" style="text-rendering:geometricPrecision">IPR</text>
<path d="M1183.66 66.83L1183.66 68.17L1182.22 68.50L1181.83 69.42L1182.62 70.67L1181.67 71.62L1180.42 70.83L1179.50 71.22L1179.17 72.66L1177.83 72.66L1177.50 71.22L1176.58 70.83L1175.33 71.62L1174.38 70.67L1175.17 69.42L1174.78 68.50L1173.34 68.17L1173.34 66.83L1174.78 66.50L1175.17 65.58L1174.38 64.33L1175.33 63.38L1176.58 64.17L1177.50 63.78L1177.83 62.34L1179.17 62.34L1179.50 63.78L1180.42 64.17L1181.67 63.38L1182.62 64.33L1181.83 65.58L1182.22 66.50z" fill="#3fbccb" stroke="#2e2e2e" stroke-width="0.8" />
<circle cx="1178.5" cy="67.5" r="2.184" fill="#444" stroke="#2e2e2e" stroke-width="0.6" />
<circle cx="1178.5" cy="67.5" r="0.8320000000000001" fill="#c8c8c8" stroke="none" stroke-width="1" />
<circle cx="1197" cy="62.9" r="8.3" fill="#3fbccb" stroke="none" stroke-width="1" />
<circle cx="1198" cy="61.7" r="3.5" fill="#c8c8c8" stroke="#2e2e2e" stroke-width="1.2" />
<path d="M1223.500 62.500l5.500 2.500-5.500 2.500-5.500-2.500z" fill="#3fbccb" stroke="#2e2e2e" stroke-width="0.8" />
<path d="M1218 68l5.500 2.500 5.500-2.500" fill="none" stroke="#3fbccb" stroke-width="1.6" />
<path d="M1241.500 63l8-7.500 1.600 1.600-7.500 8z" fill="#c8c8c8" stroke="none" stroke-width="1" />
<path d="M1239.500 62.500l3.500-1.500 2.500 2.500-1.500 3.500z" fill="#c8c8c8" stroke="none" stroke-width="1" />
<path d="M1235 62h3M1236.500 69l2-2.500" fill="none" stroke="#3fbccb" stroke-width="1.2" />
<path d="M1252.36 66.36L1252.36 67.64L1251.00 67.94L1250.64 68.81L1251.38 69.99L1250.49 70.88L1249.31 70.14L1248.44 70.50L1248.14 71.86L1246.86 71.86L1246.56 70.50L1245.69 70.14L1244.51 70.88L1243.62 69.99L1244.36 68.81L1244.00 67.94L1242.64 67.64L1242.64 66.36L1244.00 66.06L1244.36 65.19L1243.62 64.01L1244.51 63.12L1245.69 63.86L1246.56 63.50L1246.86 62.14L1248.14 62.14L1248.44 63.50L1249.31 63.86L1250.49 63.12L1251.38 64.01L1250.64 65.19L1251.00 66.06z" fill="#3fbccb" stroke="#2e2e2e" stroke-width="0.8" />
<circle cx="1247.5" cy="67" r="2.0580000000000003" fill="#444" stroke="#2e2e2e" stroke-width="0.6" />
<circle cx="1247.5" cy="67" r="0.784" fill="#c8c8c8" stroke="none" stroke-width="1" />
<rect x="1261" y="56.5" width="3.5" height="12.5" fill="#c8c8c8" rx="0.6"/>
<rect x="1268" y="56.5" width="3.5" height="12.5" fill="#c8c8c8" rx="0.6"/>
<rect x="1286.0" y="53" width="1" height="20" fill="#8a8a8a" />
<path d="M1286.5 58l4 5.0l-4 5.0z" fill="#8a8a8a" stroke="none" stroke-width="1" />
<rect x="1310.0" y="53" width="1" height="20" fill="#8a8a8a" />
<rect x="1309.0" y="58" width="3" height="10" fill="#8a8a8a" />
<path d="M1804.800 60.500l7-5.500 4.200 1.800v12.200l-4.500 3-6.700-3.500z" fill="#c8c8c8" stroke="none" stroke-width="1" />
<path d="M1804.800 64.500l6.700 3M1804.800 60.500l6.700 3 4.500-2.500M1808.200 62v8.500M1811.500 63.500v8.500M1813.800 62.500v8" fill="none" stroke="#444" stroke-width="0.9" />
<path d="M1813.700 54.800h7l2.200 3.700h-9.200z" fill="#c8c8c8" stroke="#444" stroke-width="0.6" />
<rect x="1817" y="58.5" width="2.3" height="13.5" fill="#c8c8c8" />
<circle cx="1836.9" cy="56.8" r="2.2" fill="#c8c8c8" stroke="none" stroke-width="1" />
<rect x="1829" y="61" width="2.2" height="2.4" fill="#c8c8c8" />
<rect x="1842.8" y="61" width="2.2" height="2.4" fill="#c8c8c8" />
<rect x="1832" y="61.4" width="10" height="1.6" fill="#c8c8c8" />
<path d="M1833.500 60.500h7v7.500h-7zM1835.500 62.500h3v3h-3z" fill="#c8c8c8" stroke="none" stroke-width="1" fill-rule="evenodd"/>
<rect x="1834.3" y="68" width="1.8" height="3" fill="#c8c8c8" />
<rect x="1838.2" y="68" width="1.8" height="3" fill="#c8c8c8" />
<rect x="1834" y="71.6" width="2.2" height="2" fill="#c8c8c8" />
<rect x="1838" y="71.6" width="2.2" height="2" fill="#c8c8c8" />
<rect x="1851.3" y="56" width="5.7" height="1.3" fill="#c8c8c8" />
<rect x="1853" y="63" width="4" height="1.3" fill="#c8c8c8" />
<rect x="1852" y="70" width="5" height="1.3" fill="#c8c8c8" />
<path d="M1858 54.5h11.300v4.600h-11.300zM1859.400 55.9h8.500v1.800h-8.500z" fill="#c8c8c8" stroke="none" stroke-width="1" fill-rule="evenodd"/>
<path d="M1858 68.5h11.300v4.600h-11.300zM1859.400 69.9h8.500v1.800h-8.500z" fill="#c8c8c8" stroke="none" stroke-width="1" fill-rule="evenodd"/>
<rect x="1858" y="61.5" width="11.3" height="4.6" fill="#c8c8c8" />
<rect x="1859.6" y="62.6" width="1.3" height="2.4" fill="#444" />
<rect x="1866" y="62.6" width="2" height="2.4" fill="#444" />
<circle cx="1863.8" cy="63.8" r="1.7" fill="#c8c8c8" stroke="#444" stroke-width="0.5" />
<circle cx="1876.6" cy="56.5" r="1.6" fill="#c8c8c8" stroke="none" stroke-width="1" />
<circle cx="1876.6" cy="63.5" r="1.6" fill="#c8c8c8" stroke="none" stroke-width="1" />
<circle cx="1876.6" cy="70.3" r="1.6" fill="#c8c8c8" stroke="none" stroke-width="1" />
<rect x="1879.3" y="55.9" width="3" height="1.3" fill="#c8c8c8" />
<rect x="1879.3" y="62.9" width="6.5" height="1.3" fill="#c8c8c8" />
<rect x="1879.3" y="69.7" width="6.5" height="1.3" fill="#c8c8c8" />
<path d="M1883.300 54.800h6.700l2.200 3.500h-8.900z" fill="#c8c8c8" stroke="none" stroke-width="1" />
<rect x="1886" y="58.3" width="2.3" height="13.7" fill="#c8c8c8" />
<path d="M1906 55.800l8.200 5.900-8.200 5.900-8.200-5.900z" fill="#c8c8c8" stroke="none" stroke-width="1" />
<path d="M1902 60.300h8.500M1901.500 62.300h8.500M1906 60.300v2" fill="none" stroke="#444" stroke-width="1" />
<path d="M1898 64.900l8 5 8-5M1898 67.900l8 5 8-5" fill="none" stroke="#c8c8c8" stroke-width="1.5" />
<g fill="#8a8a8a">
<rect x="3" y="92" width="1" height="1"/><rect x="6" y="92" width="1" height="1"/>
<rect x="3" y="95" width="1" height="1"/><rect x="6" y="95" width="1" height="1"/>
<rect x="3" y="98" width="1" height="1"/><rect x="6" y="98" width="1" height="1"/>
<rect x="3" y="101" width="1" height="1"/><rect x="6" y="101" width="1" height="1"/>
<rect x="3" y="104" width="1" height="1"/><rect x="6" y="104" width="1" height="1"/>
<rect x="3" y="107" width="1" height="1"/><rect x="6" y="107" width="1" height="1"/>
<rect x="3" y="110" width="1" height="1"/><rect x="6" y="110" width="1" height="1"/>
<rect x="3" y="113" width="1" height="1"/><rect x="6" y="113" width="1" height="1"/>
<rect x="3" y="116" width="1" height="1"/><rect x="6" y="116" width="1" height="1"/>
<rect x="3" y="119" width="1" height="1"/><rect x="6" y="119" width="1" height="1"/>
<rect x="3" y="122" width="1" height="1"/><rect x="6" y="122" width="1" height="1"/>
<rect x="3" y="125" width="1" height="1"/><rect x="6" y="125" width="1" height="1"/>
<rect x="3" y="128" width="1" height="1"/><rect x="6" y="128" width="1" height="1"/>
<rect x="3" y="131" width="1" height="1"/><rect x="6" y="131" width="1" height="1"/>
<rect x="3" y="134" width="1" height="1"/><rect x="6" y="134" width="1" height="1"/>
<rect x="3" y="137" width="1" height="1"/><rect x="6" y="137" width="1" height="1"/>
<rect x="3" y="140" width="1" height="1"/><rect x="6" y="140" width="1" height="1"/>
<rect x="3" y="143" width="1" height="1"/><rect x="6" y="143" width="1" height="1"/>
<rect x="3" y="146" width="1" height="1"/><rect x="6" y="146" width="1" height="1"/>
<rect x="3" y="149" width="1" height="1"/><rect x="6" y="149" width="1" height="1"/>
<rect x="3" y="152" width="1" height="1"/><rect x="6" y="152" width="1" height="1"/>
<rect x="3" y="155" width="1" height="1"/><rect x="6" y="155" width="1" height="1"/>
</g>
<rect x="19" y="104" width="10" height="1.5" fill="#a4a4a4" />
<rect x="19" y="107" width="10" height="1.5" fill="#a4a4a4" />
<path d="M29.39 142.01L28.88 143.25L27.35 143.13L26.63 143.85L26.75 145.38L25.51 145.89L24.51 144.73L23.49 144.73L22.49 145.89L21.25 145.38L21.37 143.85L20.65 143.13L19.12 143.25L18.61 142.01L19.77 141.01L19.77 139.99L18.61 138.99L19.12 137.75L20.65 137.87L21.37 137.15L21.25 135.62L22.49 135.11L23.49 136.27L24.51 136.27L25.51 135.11L26.75 135.62L26.63 137.15L27.35 137.87L28.88 137.75L29.39 138.99L28.23 139.99L28.23 141.01z" fill="#a8a8a8" stroke="none" stroke-width="1" />
<circle cx="24" cy="140.5" r="2.6" fill="#373737" stroke="none" stroke-width="1" />
<path d="M1901 124l4.500-5 4.500 5z" fill="#b4b4b4" stroke="none" stroke-width="1" />
<rect x="1901" y="129" width="9.5" height="9" fill="#5d5d5d" rx="3.500"/>
<path d="M1901 142l4.500 5 4.500-5z" fill="#b4b4b4" stroke="none" stroke-width="1" />
<rect x="292" y="116" width="2" height="35" fill="#a8a8a8" />
<rect x="339" y="116" width="2" height="35" fill="#a8a8a8" />
<rect x="456" y="116" width="2" height="35" fill="#a8a8a8" />
<rect x="573" y="116" width="2" height="35" fill="#a8a8a8" />
<rect x="1075" y="116" width="2" height="35" fill="#a8a8a8" />
<rect x="1192" y="116" width="2" height="35" fill="#a8a8a8" />
<g stroke="#3a3a3a" stroke-width="1.250" fill="none"><circle cx="59" cy="133" r="12.2" fill="#e39a52" stroke="none"/><path d="M47.3 130.5q11.7 6.500 23.4 0M47.8 136.5q11.2 6.500 22.4 0M50.5 125q8.500 5 17 0"/><path d="M59 121.8q-9 10-6 20.9M59 121.8q9 10 6 20.9M54 122.3q5 3 10.500 10M64 122.3q-5 3-10.500 10"/></g>
<g transform="translate(93.5,133)" stroke="#3a3a3a" stroke-width="1.250"><path d="M0 -13.300L12 -7V7L0 13.300L-12 7V-7z" fill="#e39a52" stroke="none"/><path d="M-12 -7L0 -0.500L12 -7M0 -0.500V13.300M-6 -10.200L6 -3.700M6 -10.200L-6 -3.700M-12 0L0 6.500L12 0M-6 -3.700V10M6 -3.700V10" fill="none"/></g>
<g transform="translate(129,133)" stroke="#3a3a3a" stroke-width="1.250" fill="none"><path d="M-10.600 -7.500a10.600 5 0 0 1 21.200 0V8a10.600 4.500 0 0 1 -21.200 0z" fill="#e39a52" stroke="none"/><path d="M-10.600 -7.500a10.600 5 0 0 0 21.200 0M-10.600 0.500a10.600 4.500 0 0 0 21.200 0M-10.600 -7.500h21.200M-5 -12l10 9M5 -12l-10 9M-4.500 -3v15.300M4.500 -3v15.300"/></g>
<g transform="translate(163.5,133)" stroke="#3a3a3a" stroke-width="1.250" fill="none"><path d="M0 -12.500L9.800 7.500a9.800 4.800 0 0 1 -19.600 0z" fill="#e39a52" stroke="none"/><path d="M0 -12.500V12.300M-6.500 1.500q6.500 4 13 0"/></g>
<g transform="translate(199,133.3) rotate(-28)" stroke="#3a3a3a" stroke-width="1.250" fill="none"><path d="M0 -13.300a9.200 13.300 0 1 1 0 26.600a9.200 13.300 0 1 1 0 -26.600zM0.500 -6.200a2.600 6.400 0 1 0 0 12.800a2.600 6.400 0 1 0 0 -12.800z" fill="#e39a52" fill-rule="evenodd" stroke="none"/><path d="M-3 -12.200q1.500 3 2.500 6.500M8 -7.500q-3 1.500-5.500 4M9.700 3q-3.500-0.500-6.500 0M3.500 12q-1-3-2.500-5.600M-9.500 4.500q3.500-1 7-1M-8 -8q3 2 5.500 4"/></g>
<g transform="translate(234,133)" stroke="#3a3a3a" stroke-width="1.300"><path d="M0 -12.500L12.500 0L0 12.500L-12.500 0z" fill="#e39a52" stroke="none"/><path d="M-6.400 -6.200L6.400 6.200M6.400 -6.200L-6.400 6.200"/></g>
<g transform="translate(269,133.5)" stroke="#3a3a3a" stroke-width="1.250"><ellipse cx="0" cy="0" rx="11.300" ry="7.600" fill="#e39a52" stroke="none"/><path d="M-11 0h22" stroke="#a9713c" stroke-width="1.500"/><path d="M-6.500 -6.400L6.500 6.400M6.500 -6.400L-6.500 6.400"/></g>
<g transform="translate(316,133)" stroke="#3a3a3a" stroke-width="1.250" fill="none"><path d="M0 -13L11.300 -6.500V6.500L0 13L-11.300 6.500V-6.500z" fill="#e39a52" stroke="none"/><path d="M0 -13L-7.500 -3.500L7.500 -3.500zM-7.500 -3.500L0 9.500L7.500 -3.500M-11.300 -6.500L-7.500 -3.500L-11.300 6.500L0 9.500L11.300 6.500L7.500 -3.500L11.300 -6.500M0 9.500V13"/></g>
<path d="M330 147h-5.500l5.500-5.500z" fill="#d0d0d0" stroke="none" stroke-width="1" />
<path transform="translate(363 133)" d="M0 -13.400Q-1.400 -7.700 -5.400 -5.400Q-7.700 -1.400 -13.400 0Q-7.700 1.400 -5.400 5.400Q-1.400 7.700 0 13.400Q1.400 7.700 5.400 5.400Q7.700 1.400 13.400 0Q7.700 -1.400 5.400 -5.400Q1.400 -7.700 0 -13.400z" fill="#e39a52" stroke="#333" stroke-width="0.500"/>
<path d="M377 147h-5.500l5.500-5.500z" fill="#d0d0d0" stroke="none" stroke-width="1" />
<text x="0" y="0" transform="translate(398 144.500) scale(0.900 1)" font-size="35" font-weight="bold" fill="#e39a52" text-anchor="middle" style="font-family:'Liberation Serif',serif">T</text>
<rect x="422" y="122" width="22" height="22.2" fill="#e39a52" />
<text x="433" y="135.8" font-size="12" fill="#333" text-anchor="middle" font-weight="bold" >svg</text>
<circle cx="480" cy="135.5" r="7.3" fill="none" stroke="#c8c8c8" stroke-width="1.2" />
<circle cx="480" cy="135.5" r="3" fill="#c8c8c8" stroke="none" stroke-width="1" />
<path d="M480 119.500v7.500M473.500 139l-5.500 3.500M486.500 139l5.500 3.500" fill="none" stroke="#3fbccb" stroke-width="1.8" />
<path d="M476 140.500h8" fill="none" stroke="#3fbccb" stroke-width="1.2" stroke-dasharray="1.500 1.500"/>
<circle cx="509.5" cy="127" r="6.8" fill="#3fbccb" stroke="none" stroke-width="1" />
<path d="M509.500 123v4.500h3.500" fill="none" stroke="#3a3a3a" stroke-width="1.2" />
<path d="M512 130.500h14M509 135.500h3M514 135.500h12M509 140.500h3M514 140.500h5" fill="none" stroke="#3fbccb" stroke-width="1.1" />
<path d="M520.500 138.500l6.500 6.500M527 138.500l-6.500 6.500" fill="none" stroke="#d8d8d8" stroke-width="2.2" />
<line x1="542.0" y1="127.5" x2="559.0" y2="127.5" stroke="#d8d8d8" stroke-width="1.2" />
<line x1="544.4895923599144" y1="121.48959235991434" x2="556.5104076400856" y2="133.51040764008565" stroke="#d8d8d8" stroke-width="1.2" />
<line x1="550.5" y1="119.0" x2="550.5" y2="136.0" stroke="#d8d8d8" stroke-width="1.2" />
<line x1="556.5104076400856" y1="121.48959235991434" x2="544.4895923599144" y2="133.51040764008565" stroke="#d8d8d8" stroke-width="1.2" />
<path d="M547.500 121l3 3 3-3M547.500 134l3-3 3 3M541 125l3 2.500-3 2.500M560 125l-3 2.500 3 2.500" fill="none" stroke="#d8d8d8" stroke-width="1" />
<rect x="535" y="134.5" width="30" height="12" fill="#3e3e3e" />
<text x="550" y="143.7" font-size="11.5" fill="#3fbccb" text-anchor="middle" font-weight="bold" >0,0,0</text>
<circle cx="597" cy="132.8" r="12" fill="none" stroke="#c8c8c8" stroke-width="1.1" />
<path d="M595.500 124.800l8.500 4.500-8.500 4.500-8.500-4.500z" fill="#e39a52" stroke="none" stroke-width="1" />
<path d="M598.300 131.800l10 4.700-10 4.700-10-4.700z" fill="#e39a52" stroke="#444" stroke-width="1.2" />
<rect x="624" y="122" width="9" height="9" fill="#c8c8c8" />
<rect x="634" y="122" width="9" height="9" fill="#c8c8c8" />
<rect x="634" y="132" width="9" height="9" fill="#c8c8c8" />
<rect x="621" y="135" width="9" height="9" fill="#e39a52" />
<path d="M653 127.500l5.500-3 5.500 3v11l-5.500 3-5.500-3z" fill="#e39a52" stroke="none" stroke-width="1" />
<path d="M653 127.500l5.500 3 5.500-3M658.5 130.500v11" fill="none" stroke="#3a3a3a" stroke-width="0.8" />
<path d="M669 127.500l5.500-3 5.500 3v11l-5.500 3-5.500-3z" fill="#e39a52" stroke="none" stroke-width="1" />
<path d="M669 127.500l5.500 3 5.500-3M674.5 130.500v11" fill="none" stroke="#3a3a3a" stroke-width="0.8" />
<path d="M666.500 119.500v26" fill="none" stroke="#e8e8e8" stroke-width="1.3" stroke-dasharray="3.500 1.500"/>
<rect x="689.5" y="129" width="7.3" height="7.3" fill="#c8c8c8" />
<rect x="689.5" y="137" width="7.3" height="7.3" fill="#c8c8c8" />
<rect x="697.5" y="137" width="7.3" height="7.3" fill="#c8c8c8" />
<rect x="698" y="121" width="3.2" height="3.2" fill="#e39a52" />
<rect x="698" y="125" width="3.2" height="3.2" fill="#e39a52" />
<rect x="698" y="129" width="3.2" height="3.2" fill="#e39a52" />
<rect x="698" y="133" width="3.2" height="3.2" fill="#e39a52" />
<rect x="702" y="121" width="3.2" height="3.2" fill="#e39a52" />
<rect x="702" y="125" width="3.2" height="3.2" fill="#e39a52" />
<rect x="702" y="129" width="3.2" height="3.2" fill="#e39a52" />
<rect x="702" y="133" width="3.2" height="3.2" fill="#e39a52" />
<rect x="706" y="121" width="3.2" height="3.2" fill="#e39a52" />
<rect x="706" y="125" width="3.2" height="3.2" fill="#e39a52" />
<rect x="706" y="129" width="3.2" height="3.2" fill="#e39a52" />
<rect x="706" y="133" width="3.2" height="3.2" fill="#e39a52" />
<rect x="710" y="121" width="3.2" height="3.2" fill="#e39a52" />
<rect x="710" y="125" width="3.2" height="3.2" fill="#e39a52" />
<rect x="710" y="129" width="3.2" height="3.2" fill="#e39a52" />
<rect x="710" y="133" width="3.2" height="3.2" fill="#e39a52" />
<rect x="725" y="129" width="3" height="3" fill="#c8c8c8" />
<rect x="725" y="133" width="3" height="3" fill="#c8c8c8" />
<rect x="725" y="137" width="3" height="3" fill="#c8c8c8" />
<rect x="725" y="141" width="3" height="3" fill="#c8c8c8" />
<rect x="729" y="129" width="3" height="3" fill="#c8c8c8" />
<rect x="729" y="133" width="3" height="3" fill="#c8c8c8" />
<rect x="729" y="137" width="3" height="3" fill="#c8c8c8" />
<rect x="729" y="141" width="3" height="3" fill="#c8c8c8" />
<rect x="733" y="129" width="3" height="3" fill="#c8c8c8" />
<rect x="733" y="133" width="3" height="3" fill="#c8c8c8" />
<rect x="733" y="137" width="3" height="3" fill="#c8c8c8" />
<rect x="733" y="141" width="3" height="3" fill="#c8c8c8" />
<rect x="737" y="129" width="3" height="3" fill="#c8c8c8" />
<rect x="737" y="133" width="3" height="3" fill="#c8c8c8" />
<rect x="737" y="137" width="3" height="3" fill="#c8c8c8" />
<rect x="737" y="141" width="3" height="3" fill="#c8c8c8" />
<rect x="733" y="121" width="7.5" height="7.5" fill="#e39a52" />
<rect x="741" y="121" width="7.5" height="7.5" fill="#e39a52" />
<rect x="733" y="129" width="7.5" height="7.5" fill="#e39a52" />
<rect x="741" y="129" width="7.5" height="7.5" fill="#e39a52" />
<path d="M761 123l5.500-2.500 5 2.500v16l-5 2.500-5.500-2.500z" fill="#e39a52" stroke="none" stroke-width="1" />
<path d="M761 123l5.500 2.500 5-2.500M766.500 125.500v16" fill="none" stroke="#3a3a3a" stroke-width="0.8" />
<path d="M772 134l6-2.500 5.500 3.500-11.500 10-5.500-3.500z" fill="#c8c8c8" stroke="none" stroke-width="1" />
<path d="M772.500 139.500l5.500 3M777.500 132l-5.500 5" fill="none" stroke="#444" stroke-width="0.8" />
<path d="M798.500 119.500l6 3-6 3-6-3z" fill="#c8c8c8" stroke="none" stroke-width="1" />
<path d="M815.500 129.500l6 3-6 3-6-3z" fill="#c8c8c8" stroke="none" stroke-width="1" />
<path d="M798.500 130.500l6 3-6 3-6-3z" fill="#c8c8c8" stroke="none" stroke-width="1" />
<path d="M815.500 140.500l6 3-6 3-6-3z" fill="#c8c8c8" stroke="none" stroke-width="1" />
<path d="M807 135l6 3-6 3-6-3z" fill="#e39a52" stroke="none" stroke-width="1" />
<path d="M807 124l6 3-6 3-6-3z" fill="none" stroke="#e39a52" stroke-width="1" stroke-dasharray="1.500 1"/>
<path d="M841.500 120.500l11.500 6v13l-11.500 6.500-11.500-6.500v-13z" fill="#e39a52" stroke="none" stroke-width="1" />
<path d="M830 126.500l11.500 6 11.500-6M841.500 132.500v13.500" fill="none" stroke="#d8d8d8" stroke-width="2.6" />
<path d="M830 126.500l11.500 6 11.500-6M841.500 132.500v13.500" fill="none" stroke="#3a3a3a" stroke-width="0.6" />
<path d="M866 130v-7.500h21v7.500M866 135v7.500h21v-7.500" fill="none" stroke="#c8c8c8" stroke-width="1.2" />
<path d="M866 132.500h21" fill="none" stroke="#c8c8c8" stroke-width="1.2" />
<rect x="874.5" y="130.5" width="4" height="4" fill="#444" stroke="#e39a52" stroke-width="1.300"/>
<rect x="864.5" y="131" width="3" height="3" fill="#444" stroke="#c8c8c8" stroke-width="1"/>
<rect x="885" y="131" width="3" height="3" fill="#444" stroke="#c8c8c8" stroke-width="1"/>
<circle cx="911.5" cy="133" r="11.5" fill="#e39a52" stroke="none" stroke-width="1" />
<circle cx="911.5" cy="133" r="7.8" fill="none" stroke="#3a3a3a" stroke-width="1" />
<line x1="900.0" y1="133.0" x2="923.0" y2="133.0" stroke="#3a3a3a" stroke-width="1" />
<line x1="903.3682720163547" y1="124.86827201635471" x2="919.6317279836453" y2="141.1317279836453" stroke="#3a3a3a" stroke-width="1" />
<line x1="911.5" y1="121.5" x2="911.5" y2="144.5" stroke="#3a3a3a" stroke-width="1" />
<line x1="919.6317279836453" y1="124.86827201635471" x2="903.3682720163547" y2="141.1317279836453" stroke="#3a3a3a" stroke-width="1" />
<rect x="944" y="121" width="15" height="15" fill="#c8c8c8" />
<path d="M959 121l-15 15" fill="none" stroke="#444" stroke-width="0.8" />
<rect x="935" y="130" width="15" height="15" fill="#e39a52" stroke="#444" stroke-width="0.800"/>
<path d="M935 130l15 15" fill="none" stroke="#3a3a3a" stroke-width="0.8" />
<path d="M981 126.500l15 7-13 9-15-7z" fill="#c8c8c8" stroke="none" stroke-width="1" />
<path d="M975 130.500l14 8M989 130l-14 9" fill="none" stroke="#444" stroke-width="0.8" />
<path d="M975.500 126l7 3-7 3.500-7-3.500z" fill="#e39a52" stroke="none" stroke-width="1" />
<path d="M975.500 131l7 3-7 3.500-7-3.500z" fill="#e39a52" stroke="#444" stroke-width="0.7" />
<rect x="1007.5" y="122.5" width="20" height="20" fill="none" stroke="#c8c8c8" stroke-width="1.200"/>
<path d="M1009 124l17 17M1026 124l-17 17" fill="none" stroke="#e39a52" stroke-width="1.1" />
<rect x="1015.5" y="130.5" width="4" height="4" fill="#444" stroke="#e39a52" stroke-width="1.300"/>
<rect x="1006" y="121" width="3" height="3" fill="#444" stroke="#c8c8c8" stroke-width="1"/>
<rect x="1026" y="121" width="3" height="3" fill="#444" stroke="#c8c8c8" stroke-width="1"/>
<rect x="1006" y="141" width="3" height="3" fill="#444" stroke="#c8c8c8" stroke-width="1"/>
<rect x="1026" y="141" width="3" height="3" fill="#444" stroke="#c8c8c8" stroke-width="1"/>
<rect x="1040.0" y="131.0" width="3" height="3" fill="#c8c8c8" />
<rect x="1040.0" y="134.8" width="3" height="3" fill="#c8c8c8" />
<rect x="1040.0" y="138.6" width="3" height="3" fill="#c8c8c8" />
<rect x="1040.0" y="142.4" width="3" height="3" fill="#c8c8c8" />
<rect x="1043.8" y="131.0" width="3" height="3" fill="#c8c8c8" />
<rect x="1043.8" y="134.8" width="3" height="3" fill="#c8c8c8" />
<rect x="1043.8" y="138.6" width="3" height="3" fill="#c8c8c8" />
<rect x="1043.8" y="142.4" width="3" height="3" fill="#c8c8c8" />
<rect x="1047.6" y="131.0" width="3" height="3" fill="#c8c8c8" />
<rect x="1047.6" y="134.8" width="3" height="3" fill="#c8c8c8" />
<rect x="1047.6" y="138.6" width="3" height="3" fill="#c8c8c8" />
<rect x="1047.6" y="142.4" width="3" height="3" fill="#c8c8c8" />
<rect x="1051.4" y="131.0" width="3" height="3" fill="#c8c8c8" />
<rect x="1051.4" y="134.8" width="3" height="3" fill="#c8c8c8" />
<rect x="1051.4" y="138.6" width="3" height="3" fill="#c8c8c8" />
<rect x="1051.4" y="142.4" width="3" height="3" fill="#c8c8c8" />
<circle cx="1055" cy="130" r="8.3" fill="#e39a52" stroke="none" stroke-width="1" />
<path d="M1047 127.500h16M1047 132.500h16M1052.500 122v16M1057.500 122v16" fill="none" stroke="#3a3a3a" stroke-width="0.8" />
<path d="M1087.500 145l-0.500-17.500 16-6" fill="none" stroke="#e39a52" stroke-width="1.1" />
<rect x="1086" y="144" width="3" height="3" fill="#444" stroke="#e39a52" stroke-width="1"/>
<rect x="1085.5" y="126" width="3" height="3" fill="#444" stroke="#e39a52" stroke-width="1"/>
<rect x="1102" y="120" width="3" height="3" fill="#444" stroke="#e39a52" stroke-width="1"/>
<path d="M1089 144.500l11-9 3.500 3.500z" fill="#c8c8c8" stroke="none" stroke-width="1" />
<path d="M1101 134l8.500-10a2.200 2.200 0 0 1 3.400 2.800l-8.400 10.200z" fill="#c8c8c8" stroke="none" stroke-width="1" />
<path d="M1123.500 122.500h20M1123.500 142.500h20M1123.500 122.500v20M1143.500 122.500v20" fill="none" stroke="#c8c8c8" stroke-width="1.1" stroke-dasharray="4 1.500"/>
<path d="M1133.500 124v17" fill="none" stroke="#e39a52" stroke-width="1.3" />
<rect x="1122" y="121" width="3" height="3" fill="#444" stroke="#c8c8c8" stroke-width="1"/>
<rect x="1142" y="121" width="3" height="3" fill="#444" stroke="#c8c8c8" stroke-width="1"/>
<rect x="1122" y="141" width="3" height="3" fill="#444" stroke="#c8c8c8" stroke-width="1"/>
<rect x="1142" y="141" width="3" height="3" fill="#444" stroke="#c8c8c8" stroke-width="1"/>
<rect x="1131.5" y="120.5" width="4" height="4" fill="#444" stroke="#e39a52" stroke-width="1.300"/>
<rect x="1131.5" y="140.5" width="4" height="4" fill="#444" stroke="#e39a52" stroke-width="1.300"/>
<path d="M1157.500 123.500h8M1157.500 132.500h8M1157.500 123.500v9M1165.500 123.500v9" fill="none" stroke="#c8c8c8" stroke-width="1" stroke-dasharray="2.500 1.500"/>
<rect x="1156" y="122" width="3" height="3" fill="#c8c8c8" />
<rect x="1164" y="122" width="3" height="3" fill="#c8c8c8" />
<rect x="1156" y="131" width="3" height="3" fill="#c8c8c8" />
<rect x="1164" y="131" width="3" height="3" fill="#c8c8c8" />
<rect x="1156" y="140" width="3" height="3" fill="#e39a52" />
<path d="M1164 143l2-4.500 12-12 3 3-12 12z" fill="#c8c8c8" stroke="none" stroke-width="1" />
<path d="M1164 143l1.500-3 2 2z" fill="#e39a52" stroke="none" stroke-width="1" />
<path d="M1176.500 127.500a2.200 2.200 0 0 1 4 3.500" fill="#c8c8c8" stroke="#c8c8c8" stroke-width="1.5" />
<rect x="1205" y="122" width="22" height="22" fill="#5fb18b" />
<rect x="1219" y="135" width="10" height="10" fill="#3a3a3a" />
<rect x="1219.8" y="135.8" width="2.6" height="2.6" fill="#e0e0e0" />
<rect x="1219.8" y="141.8" width="2.6" height="2.6" fill="#e0e0e0" />
<rect x="1222.8" y="138.8" width="2.6" height="2.6" fill="#e0e0e0" />
<rect x="1225.8" y="135.8" width="2.6" height="2.6" fill="#e0e0e0" />
<rect x="1225.8" y="141.8" width="2.6" height="2.6" fill="#e0e0e0" />
<path d="M1240 123c7 4.500 16 4.500 22 0v21c-6 0-16 0-22-4z" fill="#5fb18b" stroke="none" stroke-width="1" />
<rect x="1255" y="135" width="10" height="10" fill="#3a3a3a" />
<rect x="1255.8" y="135.8" width="2.6" height="2.6" fill="#e0e0e0" />
<rect x="1255.8" y="141.8" width="2.6" height="2.6" fill="#e0e0e0" />
<rect x="1258.8" y="138.8" width="2.6" height="2.6" fill="#e0e0e0" />
<rect x="1261.8" y="135.8" width="2.6" height="2.6" fill="#e0e0e0" />
<rect x="1261.8" y="141.8" width="2.6" height="2.6" fill="#e0e0e0" />
<path d="M1279 123.500c6 5 13 5 19 0c5 10-2 20-9.500 20.500c-8 0-16-10-9.500-20.500z" fill="#5fb18b" stroke="none" stroke-width="1" />
<rect x="1290" y="135" width="10" height="10" fill="#3a3a3a" />
<rect x="1290.8" y="135.8" width="2.6" height="2.6" fill="#e0e0e0" />
<rect x="1290.8" y="141.8" width="2.6" height="2.6" fill="#e0e0e0" />
<rect x="1293.8" y="138.8" width="2.6" height="2.6" fill="#e0e0e0" />
<rect x="1296.8" y="135.8" width="2.6" height="2.6" fill="#e0e0e0" />
<rect x="1296.8" y="141.8" width="2.6" height="2.6" fill="#e0e0e0" />
<path d="M1321 120l12 6.500v12.500l-12 6.500-12-6.500v-12.500z" fill="#5fb18b" stroke="none" stroke-width="1" />
<path d="M1309 126.500l12 6.500 12-6.500M1321 133v12.500" fill="none" stroke="#444" stroke-width="1.6" />
<rect x="1325" y="135" width="10" height="10" fill="#3a3a3a" />
<rect x="1325.8" y="135.8" width="2.6" height="2.6" fill="#e0e0e0" />
<rect x="1325.8" y="141.8" width="2.6" height="2.6" fill="#e0e0e0" />
<rect x="1328.8" y="138.8" width="2.6" height="2.6" fill="#e0e0e0" />
<rect x="1331.8" y="135.8" width="2.6" height="2.6" fill="#e0e0e0" />
<rect x="1331.8" y="141.8" width="2.6" height="2.6" fill="#e0e0e0" />
<path d="M1347 143c-5-12 4-14 9-13s9-3 8-8.500" fill="none" stroke="#5fb18b" stroke-width="6" />
<path d="M1347 143c-5-12 4-14 9-13s9-3 8-8.500" fill="none" stroke="#444" stroke-width="1" />
<rect x="1360" y="135" width="10" height="10" fill="#3a3a3a" />
<rect x="1360.8" y="135.8" width="2.6" height="2.6" fill="#e0e0e0" />
<rect x="1360.8" y="141.8" width="2.6" height="2.6" fill="#e0e0e0" />
<rect x="1363.8" y="138.8" width="2.6" height="2.6" fill="#e0e0e0" />
<rect x="1366.8" y="135.8" width="2.6" height="2.6" fill="#e0e0e0" />
<rect x="1366.8" y="141.8" width="2.6" height="2.6" fill="#e0e0e0" />
<rect x="1379" y="121" width="25" height="24" fill="#5fb18b" />
<rect x="1379" y="121" width="25" height="4" fill="#c8c8c8" />
<rect x="1381" y="122" width="2" height="2" fill="#3a3a3a" />
<rect x="1384" y="122" width="2" height="2" fill="#3a3a3a" />
<rect x="1387" y="122" width="2" height="2" fill="#3a3a3a" />
<rect x="1384.5" y="127.5" width="14" height="14" fill="#3a3a3a" />
<rect x="1385.5" y="128.5" width="3.6" height="3.6" fill="#e0e0e0" />
<rect x="1385.5" y="136.9" width="3.6" height="3.6" fill="#e0e0e0" />
<rect x="1389.7" y="132.7" width="3.6" height="3.6" fill="#e0e0e0" />
<rect x="1393.9" y="128.5" width="3.6" height="3.6" fill="#e0e0e0" />
<rect x="1393.9" y="136.9" width="3.6" height="3.6" fill="#e0e0e0" />
<path d="M1414 126.500l24 15M1438 126.500l-24 15" fill="none" stroke="#5fb18b" stroke-width="2.4" />
<path d="M1412 124.500h6l-4 5zM1440 124.500h-6l4 5zM1412 143.500h6l-4-5zM1440 143.500h-6l4-5z" fill="#5fb18b" stroke="none" stroke-width="1" />
<rect x="1421" y="123.5" width="10" height="10" fill="#3a3a3a" />
<rect x="1421.8" y="124.3" width="2.6" height="2.6" fill="#e0e0e0" />
<rect x="1421.8" y="130.3" width="2.6" height="2.6" fill="#e0e0e0" />
<rect x="1424.8" y="127.3" width="2.6" height="2.6" fill="#e0e0e0" />
<rect x="1427.8" y="124.3" width="2.6" height="2.6" fill="#e0e0e0" />
<rect x="1427.8" y="130.3" width="2.6" height="2.6" fill="#e0e0e0" />
<path d="M1453 124c10-4 18-2 20 2M1451 143c3 4 8 4 9 3M1452 126c-2 6 0 12 3 17" fill="none" stroke="#5fb18b" stroke-width="0.9" />
<path d="M1449 143.500l23-21a1.500 1.500 0 0 1 2.200 2.200l-18 16z" fill="#c8c8c8" stroke="none" stroke-width="1" />
<path d="M1450 122c2-1 4 0 5 2l16 19.500-3.500-1.500-14-14c-2-1-4-3-3.500-6z" fill="#c8c8c8" stroke="#444" stroke-width="0.6" />
<g fill="#8a8a8a">
<rect x="2" y="164" width="1" height="1"/><rect x="2" y="167" width="1" height="1"/>
<rect x="5" y="164" width="1" height="1"/><rect x="5" y="167" width="1" height="1"/>
<rect x="8" y="164" width="1" height="1"/><rect x="8" y="167" width="1" height="1"/>
<rect x="11" y="164" width="1" height="1"/><rect x="11" y="167" width="1" height="1"/>
<rect x="14" y="164" width="1" height="1"/><rect x="14" y="167" width="1" height="1"/>
<rect x="17" y="164" width="1" height="1"/><rect x="17" y="167" width="1" height="1"/>
<rect x="20" y="164" width="1" height="1"/><rect x="20" y="167" width="1" height="1"/>
<rect x="23" y="164" width="1" height="1"/><rect x="23" y="167" width="1" height="1"/>
<rect x="26" y="164" width="1" height="1"/><rect x="26" y="167" width="1" height="1"/>
<rect x="29" y="164" width="1" height="1"/><rect x="29" y="167" width="1" height="1"/>
<rect x="32" y="164" width="1" height="1"/><rect x="32" y="167" width="1" height="1"/>
<rect x="35" y="164" width="1" height="1"/><rect x="35" y="167" width="1" height="1"/>
<rect x="38" y="164" width="1" height="1"/><rect x="38" y="167" width="1" height="1"/>
</g>
<rect x="4" y="173" width="36" height="36" fill="#5285a6" />
<path d="M16.5 177.5l0 22.0 5.2 -4.8 4.4 9.2 4.0 -2.0 -4.4 -8.8 7.2 0z" fill="#c8c8c8" stroke="#2e2e2e" stroke-width="0.9" stroke-linejoin="round"/>
<ellipse cx="19.700" cy="224.500" rx="12" ry="5.800" transform="rotate(-38 19.700 224.500)" fill="none" stroke="#3fbccb" stroke-width="1.700" stroke-dasharray="4.500 2.500"/>
<path d="M22.2 221.8l0 16.72 3.9520000000000004 -3.6479999999999997 3.3440000000000003 6.991999999999999 3.04 -1.52 -3.3440000000000003 -6.688000000000001 5.472 0z" fill="#c8c8c8" stroke="#2e2e2e" stroke-width="0.9" stroke-linejoin="round"/>
<ellipse cx="18.900" cy="267.800" rx="12" ry="6.800" transform="rotate(38 18.900 267.800)" fill="none" stroke="#3fbccb" stroke-width="1.700" stroke-dasharray="4.500 2.500"/>
<path d="M24.500 261l9-9.500a1.600 1.600 0 0 1 2.400 2.200l-8.500 10z" fill="#c8c8c8" stroke="none" stroke-width="1" />
<path d="M15.500 269.500c3.500-0.500 5.500-3 7.500-7.500l4.500 3.500c-2.500 4-7 6-12 4z" fill="#c8c8c8" stroke="none" stroke-width="1" />
<rect x="16" y="296" width="12.5" height="12.5" fill="#c8c8c8" />
<path d="M22 288l4 4h-8zM22 316.500l4-4h-8zM8 302l4-4v8zM36.500 302l-4-4v8z" fill="#3fbccb" stroke="none" stroke-width="1" />
<path d="M21.500 353a13.500 13.500 0 1 1 13-12" fill="none" stroke="#3fbccb" stroke-width="1.5" />
<path d="M31 338.500h7l-3.500 5z" fill="#3fbccb" stroke="none" stroke-width="1" />
<path d="M21 331l8 8.500-8 8.500-8-8.500z" fill="#c8c8c8" stroke="none" stroke-width="1" />
<rect x="10" y="363.5" width="24.5" height="24" fill="none" stroke="#3fbccb" stroke-width="1.200" stroke-dasharray="4 2"/>
<rect x="10" y="377" width="11.5" height="11.5" fill="#c8c8c8" />
<path d="M19 374h6v6" fill="none" stroke="#3fbccb" stroke-width="1.2" />
<rect x="18.5" y="448" width="6" height="6" fill="none" stroke="#3fbccb" stroke-width="1.200"/>
<path d="M21.500 436l2.500 7h-5zM7 461.500l5-5 2 3zM36 461.500l-5-5-2 3z" fill="#3fbccb" stroke="none" stroke-width="1" />
<path d="M21.500 444v3.500M14 457l3-2M29 457l-3-2" fill="none" stroke="#c8c8c8" stroke-width="1" />
<path d="M27 437.500h10M27 441.500h10" fill="none" stroke="#c8c8c8" stroke-width="1" stroke-dasharray="3 1.500"/>
<circle cx="33" cy="437.5" r="1.3" fill="#c8c8c8" stroke="none" stroke-width="1" />
<circle cx="30.5" cy="441.5" r="1.3" fill="#c8c8c8" stroke="none" stroke-width="1" />
<rect x="4" y="473" width="36" height="2" fill="#8c8c8c" />
<rect x="8" y="484" width="28" height="28" fill="#c8c8c8" />
<rect x="9.5" y="485.5" width="25" height="25" fill="#444" />
<rect x="10.5" y="486.5" width="23" height="23" fill="#c8c8c8" />
<path d="M22 491.500l4.200 3-4.200 3-4.200-3zM22 498.500l4.200 3-4.200 3-4.200-3zM16 495l4.200 3-4.200 3-4.200-3zM28 495l4.200 3-4.200 3-4.200-3z" fill="#444" stroke="none" stroke-width="1" />
<rect x="8.5" y="521.5" width="12" height="12" fill="#383838" stroke="#c8c8c8" stroke-width="1"/>
<path d="M14.5 524v7M11 527.5h7" fill="none" stroke="#c8c8c8" stroke-width="1" />
<rect x="23" y="521" width="13" height="13" fill="#c8c8c8" />
<path d="M29.5 525l3.500 2.500-3.500 2.500-3.500-2.500z" fill="#444" stroke="none" stroke-width="1" />
<rect x="8.5" y="536.5" width="12" height="12" fill="#383838" stroke="#c8c8c8" stroke-width="1"/>
<path d="M14.5 539v7M11 542.5h7" fill="none" stroke="#c8c8c8" stroke-width="1" />
<rect x="23.5" y="536.5" width="12" height="12" fill="#383838" stroke="#c8c8c8" stroke-width="1"/>
<path d="M29.5 539v7M26 542.5h7" fill="none" stroke="#c8c8c8" stroke-width="1" />
<rect x="8.5" y="558.5" width="12" height="27" fill="#383838" stroke="#c8c8c8" stroke-width="1"/>
<path d="M14.500 568.500v7M11 572h7" fill="none" stroke="#c8c8c8" stroke-width="1" />
<rect x="23" y="558" width="13" height="28" fill="#c8c8c8" />
<path d="M29.500 569.500l3.500 2.500-3.500 2.500-3.500-2.500z" fill="#444" stroke="none" stroke-width="1" />
<rect x="4" y="591" width="36" height="36" fill="#5285a6" />
<rect x="8.5" y="595.5" width="27" height="27" fill="none" stroke="#c8c8c8" stroke-width="1.200"/>
<rect x="10.5" y="597.5" width="23" height="23" fill="none" stroke="#2e2e2e" stroke-width="0.800"/>
<path d="M13 601h14M17 606h15M17 612h11M17 618h14M14.500 602v16.500" fill="none" stroke="#c8c8c8" stroke-width="1.2" />
<rect x="12.5" y="598.5" width="3.5" height="3.5" fill="#c8c8c8" stroke="#2e2e2e" stroke-width="0.600"/>
<rect x="18.5" y="604" width="3.5" height="3.5" fill="#c8c8c8" stroke="#2e2e2e" stroke-width="0.600"/>
<rect x="18.5" y="610" width="3.5" height="3.5" fill="#c8c8c8" stroke="#2e2e2e" stroke-width="0.600"/>
<rect x="18.5" y="616" width="3.5" height="3.5" fill="#c8c8c8" stroke="#2e2e2e" stroke-width="0.600"/>
<defs><linearGradient id="mg1" x1="0" y1="0" x2="0" y2="1"><stop offset="0" stop-color="#a6dcdf"/><stop offset="1" stop-color="#3a989c"/></linearGradient><linearGradient id="mg2" x1="0" y1="0" x2="0" y2="1"><stop offset="0" stop-color="#1fb2b5"/><stop offset="1" stop-color="#128a90"/></linearGradient><linearGradient id="mg3" x1="0" y1="0" x2="0" y2="1"><stop offset="0" stop-color="#12a9ac"/><stop offset="1" stop-color="#0e8a90"/></linearGradient></defs><path d="M5.800 839.500L14 854V868H5.800z" fill="url(#mg2)"/><path d="M5.800 868L13 855.500L14 868z" fill="#0f7f86" opacity=".7"/><path d="M28.200 839H38V868H30.200V853.500L25.100 861.500L22.700 851.400z" fill="url(#mg3)"/><path d="M38 840V868H32z" fill="#35c6c8" opacity=".8"/><path d="M5.800 839L15.300 838L25.100 861.500H18.500z" fill="url(#mg1)"/>
<path d="M55 212.500l3.500 2-3.500 2zM70 212.500l-3.500 2 3.500 2zM55 224l3.500 2-3.500 2zM70 224l-3.500 2 3.500 2z" fill="#5a5a5a" stroke="none" stroke-width="1" />
<rect x="57" y="213.5" width="11" height="13.5" fill="none" stroke="#5a5a5a" stroke-width="1" stroke-dasharray="5 3"/>
<path d="M443.0 216.5h9l-4.5 5z" fill="#c8c8c8" stroke="none" stroke-width="1" />
<rect x="71.5" y="237.5" width="8" height="8" fill="none" stroke="#a4a4a4" stroke-width="1"/>
<path d="M73.5 241.5h4" fill="none" stroke="#c8c8c8" stroke-width="1" />
<path d="M75.5 239.5v4" fill="none" stroke="#c8c8c8" stroke-width="1" />
<rect x="86" y="238" width="9.5" height="8" fill="#c8c8c8" rx="0.800"/>
<path d="M96 242l4.200-4.200v8.400z" fill="#c8c8c8" stroke="none" stroke-width="1" />
<rect x="71.5" y="257.5" width="8" height="8" fill="none" stroke="#a4a4a4" stroke-width="1"/>
<path d="M73.5 261.5h4" fill="none" stroke="#c8c8c8" stroke-width="1" />
<path d="M75.5 259.5v4" fill="none" stroke="#c8c8c8" stroke-width="1" />
<rect x="86" y="258" width="9.5" height="8" fill="#c8c8c8" rx="0.800"/>
<path d="M96 262l4.200-4.200v8.400z" fill="#c8c8c8" stroke="none" stroke-width="1" />
<rect x="71.5" y="277.5" width="8" height="8" fill="none" stroke="#a4a4a4" stroke-width="1"/>
<path d="M73.5 281.5h4" fill="none" stroke="#c8c8c8" stroke-width="1" />
<path d="M75.5 279.5v4" fill="none" stroke="#c8c8c8" stroke-width="1" />
<rect x="86" y="278" width="9.5" height="8" fill="#c8c8c8" rx="0.800"/>
<path d="M96 282l4.200-4.200v8.400z" fill="#c8c8c8" stroke="none" stroke-width="1" />
<rect x="71.5" y="297.5" width="8" height="8" fill="none" stroke="#a4a4a4" stroke-width="1"/>
<path d="M73.5 301.5h4" fill="none" stroke="#c8c8c8" stroke-width="1" />
<path d="M75.5 299.5v4" fill="none" stroke="#c8c8c8" stroke-width="1" />
<rect x="86" y="298" width="9.5" height="8" fill="#c8c8c8" rx="0.800"/>
<path d="M96 302l4.200-4.200v8.400z" fill="#c8c8c8" stroke="none" stroke-width="1" />
<rect x="71.5" y="317.5" width="8" height="8" fill="none" stroke="#a4a4a4" stroke-width="1"/>
<path d="M73.5 321.5h4" fill="none" stroke="#c8c8c8" stroke-width="1" />
<path d="M90 316.5h10l-5 10.500h-10z" fill="#c8c8c8" stroke="#2e2e2e" stroke-width="0.6" />
<path d="M84.5 321.7h6" fill="none" stroke="#e8363c" stroke-width="1.5" />
<path d="M89.5 318.7l4.300 3-4.300 3z" fill="#e8363c" stroke="none" stroke-width="1" />
<rect x="83.5" y="337.5" width="8" height="8" fill="none" stroke="#a4a4a4" stroke-width="1"/>
<path d="M85.5 341.5h4" fill="none" stroke="#c8c8c8" stroke-width="1" />
<path d="M87.5 339.5v4" fill="none" stroke="#c8c8c8" stroke-width="1" />
<path d="M102 336.5h10l-5 10.500h-10z" fill="#c8c8c8" stroke="#2e2e2e" stroke-width="0.6" />
<path d="M96.5 341.7h6" fill="none" stroke="#e8363c" stroke-width="1.5" />
<path d="M101.5 338.7l4.300 3-4.300 3z" fill="#e8363c" stroke="none" stroke-width="1" />
<circle cx="93" cy="362" r="7.3" fill="none" stroke="#c8c8c8" stroke-width="1.2" />
<rect x="92.5" y="358.5" width="5" height="7.5" fill="#3fbccb" stroke="#2e2e2e" stroke-width="0.600"/>
<circle cx="91" cy="363.7" r="3" fill="#c8c8c8" stroke="#2e2e2e" stroke-width="0.6" />
<circle cx="93" cy="382" r="7.3" fill="none" stroke="#c8c8c8" stroke-width="1.2" />
<rect x="92.5" y="378.5" width="5" height="7.5" fill="#3fbccb" stroke="#2e2e2e" stroke-width="0.600"/>
<circle cx="91" cy="383.7" r="3" fill="#c8c8c8" stroke="#2e2e2e" stroke-width="0.6" />
<rect x="71.5" y="397.5" width="8" height="8" fill="none" stroke="#a4a4a4" stroke-width="1"/>
<path d="M73.5 401.5h4" fill="none" stroke="#c8c8c8" stroke-width="1" />
<path d="M75.5 399.5v4" fill="none" stroke="#c8c8c8" stroke-width="1" />
<circle cx="93" cy="402" r="7.3" fill="none" stroke="#c8c8c8" stroke-width="1.2" />
<rect x="92.5" y="398.5" width="5" height="7.5" fill="#3fbccb" stroke="#2e2e2e" stroke-width="0.600"/>
<circle cx="91" cy="403.7" r="3" fill="#c8c8c8" stroke="#2e2e2e" stroke-width="0.6" />
<path d="M75.500 327v15.500h8" fill="none" stroke="#9a9a9a" stroke-width="1" />
<path d="M448 240l4.500-5 4.500 5z" fill="#b8b8b8" stroke="none" stroke-width="1" />
<path d="M448 845l4.500 5 4.500-5z" fill="#b8b8b8" stroke="none" stroke-width="1" />
<path d="M58 854.500l-5 4.500 5 4.500z" fill="#b8b8b8" stroke="none" stroke-width="1" />
<path d="M437 854.500l5 4.500-5 4.500z" fill="#b8b8b8" stroke="none" stroke-width="1" />
<g fill="#8a8a8a"><rect x="186" y="867" width="1" height="1"/><rect x="189" y="867" width="1" height="1"/><rect x="192" y="867" width="1" height="1"/><rect x="195" y="867" width="1" height="1"/><rect x="198" y="867" width="1" height="1"/><rect x="201" y="867" width="1" height="1"/><rect x="204" y="867" width="1" height="1"/><rect x="207" y="867" width="1" height="1"/><rect x="210" y="867" width="1" height="1"/><rect x="213" y="867" width="1" height="1"/><rect x="216" y="867" width="1" height="1"/><rect x="219" y="867" width="1" height="1"/><rect x="222" y="867" width="1" height="1"/><rect x="225" y="867" width="1" height="1"/><rect x="228" y="867" width="1" height="1"/><rect x="231" y="867" width="1" height="1"/><rect x="234" y="867" width="1" height="1"/><rect x="237" y="867" width="1" height="1"/><rect x="240" y="867" width="1" height="1"/><rect x="243" y="867" width="1" height="1"/><rect x="246" y="867" width="1" height="1"/><rect x="249" y="867" width="1" height="1"/><rect x="252" y="867" width="1" height="1"/><rect x="255" y="867" width="1" height="1"/><rect x="258" y="867" width="1" height="1"/><rect x="261" y="867" width="1" height="1"/><rect x="264" y="867" width="1" height="1"/><rect x="267" y="867" width="1" height="1"/><rect x="270" y="867" width="1" height="1"/><rect x="273" y="867" width="1" height="1"/><rect x="276" y="867" width="1" height="1"/><rect x="279" y="867" width="1" height="1"/><rect x="282" y="867" width="1" height="1"/><rect x="285" y="867" width="1" height="1"/><rect x="288" y="867" width="1" height="1"/><rect x="291" y="867" width="1" height="1"/><rect x="294" y="867" width="1" height="1"/><rect x="297" y="867" width="1" height="1"/><rect x="300" y="867" width="1" height="1"/><rect x="303" y="867" width="1" height="1"/><rect x="306" y="867" width="1" height="1"/><rect x="309" y="867" width="1" height="1"/><rect x="312" y="867" width="1" height="1"/><rect x="315" y="867" width="1" height="1"/><rect x="318" y="867" width="1" height="1"/></g>
<rect x="472.0" y="189" width="1" height="16" fill="#8a8a8a" />
<rect x="471.0" y="193" width="3" height="8" fill="#8a8a8a" />
<rect x="481" y="193.5" width="9.5" height="7.5" fill="#c8c8c8" rx="0.800"/>
<path d="M491.2 197l4-3.800v7.600z" fill="#c8c8c8" stroke="none" stroke-width="1" />
<rect x="500" y="192" width="9" height="6" fill="#c8c8c8" />
<path d="M510 195l4.200-4v8z" fill="#c8c8c8" stroke="none" stroke-width="1" />
<rect x="499.8" y="197.5" width="6.7" height="5.3" fill="#3fbccb" stroke="#2e2e2e" stroke-width="0.600"/>
<path d="M501.300 197.500v-1.300a1.850 1.850 0 0 1 3.700 0v1.300" fill="none" stroke="#3fbccb" stroke-width="1.3" />
<rect x="502.6" y="199.3" width="1.2" height="1.8" fill="#2e2e2e" />
<rect x="519" y="192" width="9" height="6" fill="#c8c8c8" />
<path d="M529 195l4.200-4v8z" fill="#c8c8c8" stroke="none" stroke-width="1" />
<path d="M527.16 198.66L527.16 199.74L526.00 200.01L525.69 200.75L526.33 201.76L525.56 202.53L524.55 201.89L523.81 202.20L523.54 203.36L522.46 203.36L522.19 202.20L521.45 201.89L520.44 202.53L519.67 201.76L520.31 200.75L520.00 200.01L518.84 199.74L518.84 198.66L520.00 198.39L520.31 197.65L519.67 196.64L520.44 195.87L521.45 196.51L522.19 196.20L522.46 195.04L523.54 195.04L523.81 196.20L524.55 196.51L525.56 195.87L526.33 196.64L525.69 197.65L526.00 198.39z" fill="#3fbccb" stroke="#2e2e2e" stroke-width="0.6" />
<circle cx="523" cy="199.2" r="1.6800000000000002" fill="#444" stroke="#2e2e2e" stroke-width="0.5" />
<path d="M541.800 191h6.400v11l-3.200-2.600-3.200 2.600z" fill="#c8c8c8" stroke="none" stroke-width="1" />
<path d="M556.800 204l3.200-4.500h11l-2.500 4.500z" fill="#c8c8c8" stroke="none" stroke-width="1" />
<path d="M559 201.800h10.500M562 204l2.500-4.500" fill="none" stroke="#444" stroke-width="0.7" />
<path d="M561.800 195.300l5.500-4.300v8.800l-5.500 2.500z" fill="#3fbccb" stroke="#2e2e2e" stroke-width="0.5" />
<path d="M582.300 190.500v6h-5.500" fill="none" stroke="#c8c8c8" stroke-width="1.3" />
<path d="M582.300 189.500l2.500 3h-5zM575.800 196.500l3-2.500v5z" fill="#c8c8c8" stroke="none" stroke-width="1" />
<circle cx="586.4" cy="198.3" r="3" fill="none" stroke="#3fbccb" stroke-width="1.5" />
<path d="M584.400 200.500l-3 3.300" fill="none" stroke="#3fbccb" stroke-width="1.8" />
<path d="M599 199.300l7-7.500 2.300 2.300-7 7.500z" fill="#c8c8c8" stroke="none" stroke-width="1" />
<path d="M596.500 203l1.800-3.500 2.400 2.400z" fill="#3fbccb" stroke="none" stroke-width="1" />
<path d="M603 203.500a2 2 0 0 0 3.800-1" fill="none" stroke="#c8c8c8" stroke-width="1" />
<rect x="616.0" y="189" width="1" height="16" fill="#8a8a8a" />
<rect x="615.0" y="193" width="3" height="8" fill="#8a8a8a" />
<rect x="623" y="188" width="18.5" height="18" fill="#5285a6" />
<rect x="626" y="191" width="12" height="12" fill="#2e2e2e" />
<rect x="627" y="192" width="10" height="10" fill="#dcdcdc" />
<rect x="628" y="193" width="2" height="2" fill="#2e2e2e" />
<rect x="628" y="196" width="2" height="2" fill="#2e2e2e" />
<rect x="628" y="199" width="2" height="2" fill="#2e2e2e" />
<rect x="631" y="193" width="2" height="2" fill="#2e2e2e" />
<rect x="631" y="196" width="2" height="2" fill="#2e2e2e" />
<rect x="631" y="199" width="2" height="2" fill="#2e2e2e" />
<rect x="634" y="193" width="2" height="2" fill="#2e2e2e" />
<rect x="634" y="196" width="2" height="2" fill="#2e2e2e" />
<rect x="634" y="199" width="2" height="2" fill="#2e2e2e" />
<rect x="644.5" y="191.5" width="13" height="11" fill="#3c3c3c" stroke="#d4d4d4" stroke-width="1"/>
<rect x="646" y="194.5" width="10" height="5.5" fill="#3a3a3a" />
<path d="M646 193h10M646 201h10" fill="none" stroke="#d4d4d4" stroke-width="1" stroke-dasharray="1.500 1"/>
<path d="M645.500 194.500h11M645.500 200h11" fill="none" stroke="#d4d4d4" stroke-width="0.6" />
<rect x="663.5" y="191.5" width="13" height="11" fill="#3c3c3c" stroke="#d4d4d4" stroke-width="1"/>
<circle cx="670" cy="197" r="3.1" fill="#3fbccb" stroke="none" stroke-width="1" />
<rect x="680.5" y="188.5" width="17" height="17" fill="#3e3e3e" stroke="#383838" stroke-width="1"/>
<rect x="682" y="191" width="14" height="12" fill="#4e4e4e" />
<circle cx="689" cy="197" r="3.8" fill="#3c3c3c" stroke="none" stroke-width="1" />
<rect x="701.5" y="191.5" width="13" height="11" fill="#3c3c3c" stroke="#d4d4d4" stroke-width="1"/>
<path d="M702.500 197h11" fill="none" stroke="#3fbccb" stroke-width="1.8" stroke-dasharray="0.800 0.800"/>
<path d="M708 192.500v9" fill="none" stroke="#3fbccb" stroke-width="1.8" stroke-dasharray="1 1.200"/>
<rect x="720.5" y="191.5" width="13" height="11" fill="#3c3c3c" stroke="#d4d4d4" stroke-width="1"/>
<circle cx="729.5" cy="195.3" r="2.4" fill="#3fbccb" stroke="none" stroke-width="1" />
<path d="M722 201l3.500-4.500 3.500 4.500z" fill="#3fbccb" stroke="none" stroke-width="1" />
<rect x="739.5" y="191.5" width="13" height="11" fill="#3c3c3c" stroke="#d4d4d4" stroke-width="1"/>
<text x="746" y="201" font-size="11.500" font-weight="bold" fill="#3fbccb" text-anchor="middle" style="font-family:'Liberation Serif',serif">T</text>
<rect x="760.0" y="189" width="1" height="16" fill="#8a8a8a" />
<rect x="759.0" y="193" width="3" height="8" fill="#8a8a8a" />
<path d="M776.5 190l6.2 3.36v7.28l-6.2 3.36l-6.2 -3.36v-7.28z" fill="none" stroke="#d4d4d4" stroke-width="1.3" stroke-linejoin="round"/>
<path d="M770.3 193.36l6.2 3.36l6.2 -3.36M776.5 196.72v7.28" fill="none" stroke="#d4d4d4" stroke-width="1" />
<path d="M776.500 190.500v3M772 199l2.500 1M781 199l-2.500 1" fill="none" stroke="#9a9a9a" stroke-width="0.7" />
<rect x="786" y="188" width="18" height="18" fill="#5285a6" />
<path d="M795.5 189.20000000000002l7 3.6479999999999997v7.904l-7 3.6479999999999997l-7 -3.6479999999999997v-7.904z" fill="#3fbccb" stroke="#2e2e2e" stroke-width="0.9" stroke-linejoin="round"/>
<path d="M788.5 192.848l7 3.6479999999999997l7 -3.6479999999999997M795.5 196.496v7.904" fill="none" stroke="#2e2e2e" stroke-width="0.9" />
<path d="M795.500 189.200l7 3.650-7 3.650-7-3.650z" fill="#7fe0ea" stroke="#2e2e2e" stroke-width="0.8" />
<clipPath id="cpm"><circle cx="814" cy="196.800" r="6.200"/></clipPath><g clip-path="url(#cpm)"><rect x="807" y="190" width="14" height="14" fill="#d0d0d0"/><rect x="814.500" y="190" width="7" height="14" fill="#2e2e2e"/><rect x="814.5" y="190.3" width="1.500" height="1.500" fill="#e4e4e4"/><rect x="814.5" y="193.3" width="1.500" height="1.500" fill="#e4e4e4"/><rect x="814.5" y="196.3" width="1.500" height="1.500" fill="#e4e4e4"/><rect x="814.5" y="199.3" width="1.500" height="1.500" fill="#e4e4e4"/><rect x="814.5" y="202.3" width="1.500" height="1.500" fill="#e4e4e4"/><rect x="816.0" y="191.8" width="1.500" height="1.500" fill="#e4e4e4"/><rect x="816.0" y="194.8" width="1.500" height="1.500" fill="#e4e4e4"/><rect x="816.0" y="197.8" width="1.500" height="1.500" fill="#e4e4e4"/><rect x="816.0" y="200.8" width="1.500" height="1.500" fill="#e4e4e4"/><rect x="817.5" y="190.3" width="1.500" height="1.500" fill="#e4e4e4"/><rect x="817.5" y="193.3" width="1.500" height="1.500" fill="#e4e4e4"/><rect x="817.5" y="196.3" width="1.500" height="1.500" fill="#e4e4e4"/><rect x="817.5" y="199.3" width="1.500" height="1.500" fill="#e4e4e4"/><rect x="817.5" y="202.3" width="1.500" height="1.500" fill="#e4e4e4"/><rect x="819.0" y="191.8" width="1.500" height="1.500" fill="#e4e4e4"/><rect x="819.0" y="194.8" width="1.500" height="1.500" fill="#e4e4e4"/><rect x="819.0" y="197.8" width="1.500" height="1.500" fill="#e4e4e4"/><rect x="819.0" y="200.8" width="1.500" height="1.500" fill="#e4e4e4"/><rect x="820.5" y="190.3" width="1.500" height="1.500" fill="#e4e4e4"/><rect x="820.5" y="193.3" width="1.500" height="1.500" fill="#e4e4e4"/><rect x="820.5" y="196.3" width="1.500" height="1.500" fill="#e4e4e4"/><rect x="820.5" y="199.3" width="1.500" height="1.500" fill="#e4e4e4"/><rect x="820.5" y="202.3" width="1.500" height="1.500" fill="#e4e4e4"/></g>
<path d="M833.5 190l6.2 3.36v7.28l-6.2 3.36l-6.2 -3.36v-7.28z" fill="#3fbccb" stroke="#2e2e2e" stroke-width="3" stroke-linejoin="round"/>
<path d="M827.3 193.36l6.2 3.36l6.2 -3.36M833.5 196.72v7.28" fill="none" stroke="#2e2e2e" stroke-width="3" />
<path d="M833.5 190l6.2 3.36v7.28l-6.2 3.36l-6.2 -3.36v-7.28z" fill="none" stroke="#d4d4d4" stroke-width="1.2" stroke-linejoin="round"/>
<path d="M827.3 193.36l6.2 3.36l6.2 -3.36M833.5 196.72v7.28" fill="none" stroke="#d4d4d4" stroke-width="1.2" />
<clipPath id="cpt"><circle cx="852" cy="196.800" r="6.300"/></clipPath><g clip-path="url(#cpt)"><rect x="845" y="190" width="14" height="14" fill="#2e2e2e"/><rect x="845.5" y="190.3" width="1.500" height="1.500" fill="#e4e4e4"/><rect x="845.5" y="193.3" width="1.500" height="1.500" fill="#e4e4e4"/><rect x="845.5" y="196.3" width="1.500" height="1.500" fill="#e4e4e4"/><rect x="845.5" y="199.3" width="1.500" height="1.500" fill="#e4e4e4"/><rect x="845.5" y="202.3" width="1.500" height="1.500" fill="#e4e4e4"/><rect x="847.0" y="191.8" width="1.500" height="1.500" fill="#e4e4e4"/><rect x="847.0" y="194.8" width="1.500" height="1.500" fill="#e4e4e4"/><rect x="847.0" y="197.8" width="1.500" height="1.500" fill="#e4e4e4"/><rect x="847.0" y="200.8" width="1.500" height="1.500" fill="#e4e4e4"/><rect x="848.5" y="190.3" width="1.500" height="1.500" fill="#e4e4e4"/><rect x="848.5" y="193.3" width="1.500" height="1.500" fill="#e4e4e4"/><rect x="848.5" y="196.3" width="1.500" height="1.500" fill="#e4e4e4"/><rect x="848.5" y="199.3" width="1.500" height="1.500" fill="#e4e4e4"/><rect x="848.5" y="202.3" width="1.500" height="1.500" fill="#e4e4e4"/><rect x="850.0" y="191.8" width="1.500" height="1.500" fill="#e4e4e4"/><rect x="850.0" y="194.8" width="1.500" height="1.500" fill="#e4e4e4"/><rect x="850.0" y="197.8" width="1.500" height="1.500" fill="#e4e4e4"/><rect x="850.0" y="200.8" width="1.500" height="1.500" fill="#e4e4e4"/><rect x="851.5" y="190.3" width="1.500" height="1.500" fill="#e4e4e4"/><rect x="851.5" y="193.3" width="1.500" height="1.500" fill="#e4e4e4"/><rect x="851.5" y="196.3" width="1.500" height="1.500" fill="#e4e4e4"/><rect x="851.5" y="199.3" width="1.500" height="1.500" fill="#e4e4e4"/><rect x="851.5" y="202.3" width="1.500" height="1.500" fill="#e4e4e4"/><rect x="853.0" y="191.8" width="1.500" height="1.500" fill="#e4e4e4"/><rect x="853.0" y="194.8" width="1.500" height="1.500" fill="#e4e4e4"/><rect x="853.0" y="197.8" width="1.500" height="1.500" fill="#e4e4e4"/><rect x="853.0" y="200.8" width="1.500" height="1.500" fill="#e4e4e4"/><rect x="854.5" y="190.3" width="1.500" height="1.500" fill="#e4e4e4"/><rect x="854.5" y="193.3" width="1.500" height="1.500" fill="#e4e4e4"/><rect x="854.5" y="196.3" width="1.500" height="1.500" fill="#e4e4e4"/><rect x="854.5" y="199.3" width="1.500" height="1.500" fill="#e4e4e4"/><rect x="854.5" y="202.3" width="1.500" height="1.500" fill="#e4e4e4"/><rect x="856.0" y="191.8" width="1.500" height="1.500" fill="#e4e4e4"/><rect x="856.0" y="194.8" width="1.500" height="1.500" fill="#e4e4e4"/><rect x="856.0" y="197.8" width="1.500" height="1.500" fill="#e4e4e4"/><rect x="856.0" y="200.8" width="1.500" height="1.500" fill="#e4e4e4"/><rect x="857.5" y="190.3" width="1.500" height="1.500" fill="#e4e4e4"/><rect x="857.5" y="193.3" width="1.500" height="1.500" fill="#e4e4e4"/><rect x="857.5" y="196.3" width="1.500" height="1.500" fill="#e4e4e4"/><rect x="857.5" y="199.3" width="1.500" height="1.500" fill="#e4e4e4"/><rect x="857.5" y="202.3" width="1.500" height="1.500" fill="#e4e4e4"/></g>
<path d="M871 192.300a3.300 3.300 0 0 1 3.300 3.300c0 1.800-1.500 2.500-1.500 4.200h-3.600c0-1.700-1.500-2.400-1.500-4.200a3.300 3.300 0 0 1 3.300-3.300z" fill="#d8d8d8" stroke="none" stroke-width="1" />
<rect x="869.8" y="201.8" width="2.4" height="2" fill="#d8d8d8" />
<path d="M871 189.800v1.400M866 191.500l1.200 1.200M876 191.500l-1.200 1.200M864 196.300h1.800M876.200 196.300h1.800" fill="none" stroke="#d8d8d8" stroke-width="1.3" />
<circle cx="892.5" cy="196" r="4.6" fill="#3d5a60" stroke="none" stroke-width="1" />
<path d="M883.500 198.500l4.500 3M885.500 197l4 2.800" fill="none" stroke="#505050" stroke-width="1.1" />
<rect x="904.0" y="189" width="1" height="16" fill="#8a8a8a" />
<rect x="903.0" y="193" width="3" height="8" fill="#8a8a8a" />
<path d="M913.500 201l4-2.500h9l-4 5h-9z" fill="none" stroke="#3fbccb" stroke-width="0.9" />
<path d="M916 203.500l4-5M919.500 203.500l4-5M915 200.500h10M914 202h10" fill="none" stroke="#3fbccb" stroke-width="0.7" />
<circle cx="919.8" cy="194.6" r="5.6" fill="#d0d0d0" stroke="none" stroke-width="1" />
<path d="M916 199v2M918.500 199.500v2.500M921 199.500v2M923.500 198.500v2" fill="none" stroke="#d0d0d0" stroke-width="1.2" />
<circle cx="936" cy="199.5" r="4.5" fill="#5a5a5a" stroke="none" stroke-width="1" />
<circle cx="938.5" cy="197" r="4.6" fill="#8a8a8a" stroke="none" stroke-width="1" />
<circle cx="941.5" cy="194.5" r="4.7" fill="#d0d0d0" stroke="none" stroke-width="1" />
<path d="M958 191.500a5.800 5.800 0 0 0 0 11.500" fill="none" stroke="#3fbccb" stroke-width="2.2" />
<rect x="959" y="190.5" width="2" height="2" fill="#e6e6e6" />
<rect x="961.5" y="192.5" width="2" height="2" fill="#e6e6e6" />
<rect x="963" y="196" width="2" height="2" fill="#e6e6e6" />
<rect x="961.5" y="199.5" width="2" height="2" fill="#e6e6e6" />
<rect x="959" y="201.5" width="2" height="2" fill="#e6e6e6" />
<rect x="968.5" y="188.5" width="17" height="17" fill="#414141" stroke="#373737" stroke-width="1"/>
<rect x="971" y="191" width="6" height="6" fill="#3d4d50" />
<rect x="975" y="195" width="8.2" height="7.8" fill="#3f585c" />
<rect x="991.0" y="189" width="1" height="16" fill="#8a8a8a" />
<rect x="990.0" y="193" width="3" height="8" fill="#8a8a8a" />
<rect x="998" y="188" width="18" height="18" fill="#5285a6" />
<rect x="1001" y="191" width="8" height="8" fill="#5285a6" stroke="#2e2e2e" stroke-width="2.600" rx="1"/>
<rect x="1001" y="191" width="8" height="8" fill="none" stroke="#3fbccb" stroke-width="1.500" stroke-dasharray="3 1.200" rx="1"/>
<path d="M1007.5 194.3l0 9.68 2.2880000000000003 -2.112 1.9360000000000002 4.048 1.76 -0.88 -1.9360000000000002 -3.8720000000000003 3.168 0z" fill="#c8c8c8" stroke="#2e2e2e" stroke-width="0.9" stroke-linejoin="round"/>
<rect x="1021.0" y="189" width="1" height="16" fill="#8a8a8a" />
<rect x="1020.0" y="193" width="3" height="8" fill="#8a8a8a" />
<rect x="1029" y="188.5" width="16.5" height="17" fill="#3c3c3c" />
<rect x="1048" y="188.5" width="16.5" height="17" fill="#3c3c3c" />
<rect x="1067" y="188.5" width="16.5" height="17" fill="#3c3c3c" />
<rect x="1035.5" y="191" width="7.5" height="7.5" fill="#d0d0d0" />
<rect x="1031" y="195" width="8" height="7.8" fill="#d0d0d0" />
<path d="M1035.500 195v3.500h3.500" fill="none" stroke="#555" stroke-width="1" />
<path d="M1037 196.500h4.500v-4h-4.500z" fill="none" stroke="#3c3c3c" stroke-width="0" />
<rect x="1036.7" y="192.2" width="5.1" height="5.1" fill="none" stroke="#3c3c3c" stroke-width="1"/>
<rect x="1032.2" y="196.2" width="5.6" height="5.4" fill="#d0d0d0" />
<rect x="1054.5" y="191.5" width="7.5" height="7.5" fill="none" stroke="#d0d0d0" stroke-width="1.200"/>
<rect x="1050" y="195" width="9.5" height="8" fill="#d0d0d0" />
<rect x="1069.5" y="191.5" width="11.5" height="11" fill="#3c3c3c" stroke="#d0d0d0" stroke-width="1"/>
<path d="M1072.500 194.500l6 6" fill="none" stroke="#d0d0d0" stroke-width="1.6" />
<circle cx="1072.8" cy="194.7" r="1.8" fill="#d0d0d0" stroke="none" stroke-width="1" />
<rect x="1089.0" y="189" width="1" height="16" fill="#8a8a8a" />
<rect x="1088.0" y="193" width="3" height="8" fill="#8a8a8a" />
<circle cx="1106" cy="197" r="6" fill="#d0d0d0" stroke="none" stroke-width="1" />
<line x1="1112.0" y1="197.0" x2="1106.5694018992256" y2="199.12503681783596" stroke="#444" stroke-width="1.1" />
<line x1="1109.0" y1="202.19615242270663" x2="1104.4443650813896" y2="198.5556349186104" stroke="#444" stroke-width="1.1" />
<line x1="1103.0" y1="202.19615242270663" x2="1103.874963182164" y2="196.43059810077446" stroke="#444" stroke-width="1.1" />
<line x1="1100.0" y1="197.0" x2="1105.4305981007744" y2="194.87496318216404" stroke="#444" stroke-width="1.1" />
<line x1="1103.0" y1="191.80384757729337" x2="1107.5556349186104" y2="195.4443650813896" stroke="#444" stroke-width="1.1" />
<line x1="1109.0" y1="191.80384757729337" x2="1108.125036817836" y2="197.56940189922554" stroke="#444" stroke-width="1.1" />
<circle cx="1106" cy="197" r="1.8" fill="#444" stroke="none" stroke-width="1" />
<rect x="1165" y="191" width="7" height="12" fill="#d0d0d0" />
<circle cx="1165.5" cy="197" r="4" fill="#d0d0d0" stroke="none" stroke-width="1" />
<path d="M1166.500 193.500a3.500 3.500 0 0 1 0 7z" fill="#444" stroke="none" stroke-width="1" />
<rect x="1219" y="188" width="18" height="18" fill="#5285a6" />
<circle cx="1228" cy="197" r="6.5" fill="#3fbccb" stroke="#2e2e2e" stroke-width="0.9" />
<text x="1228" y="199.300" font-size="6" font-weight="bold" fill="#2e2e2e" text-anchor="middle">ON</text>
<path d="M1403.0 194.0h9l-4.5 5z" fill="#c8c8c8" stroke="none" stroke-width="1" />
<path d="M493.500 845.500v-13.500" fill="none" stroke="#00e000" stroke-width="1" />
<path d="M493.500 845.500h13.500" fill="none" stroke="#ff1010" stroke-width="1" />
<rect x="492.5" y="843.5" width="2" height="2.5" fill="#1030ff" />
<text x="491" y="829.500" font-size="9.500" font-weight="bold" fill="#10d810">y</text>
<text x="506.800" y="844.500" font-size="9.500" font-weight="bold" fill="#f01818">x</text>
<defs><radialGradient id="sg" cx="0.42" cy="0.47" r="0.62"><stop offset="0" stop-color="#f4f4f4"/><stop offset="0.18" stop-color="#c4c4c4"/><stop offset="0.45" stop-color="#989898"/><stop offset="0.8" stop-color="#808080"/><stop offset="1" stop-color="#505050"/></radialGradient><clipPath id="cvp"><rect x="468" y="207" width="1429" height="664"/></clipPath></defs><g clip-path="url(#cvp)"><ellipse cx="674.200" cy="864" rx="14.200" ry="16" fill="url(#sg)"/><circle cx="689" cy="868.500" r="2" fill="#c0c0c0"/><circle cx="689" cy="868.500" r="0.800" fill="#666"/></g>
<text x="1139" y="861" font-size="10.500" font-weight="bold" fill="#ffffff">孤立</text>
<text x="1160.500" y="861" font-size="10.500" font-weight="bold" fill="#ffffff">:</text>
<text x="1167.3" y="861" font-size="10.5" fill="#ffffff" font-weight="bold" letter-spacing="-0.199" >persp</text>
<g fill="#8a8a8a">
<rect x="3" y="879" width="1" height="1"/><rect x="6" y="879" width="1" height="1"/>
<rect x="3" y="882" width="1" height="1"/><rect x="6" y="882" width="1" height="1"/>
<rect x="3" y="885" width="1" height="1"/><rect x="6" y="885" width="1" height="1"/>
<rect x="3" y="888" width="1" height="1"/><rect x="6" y="888" width="1" height="1"/>
<rect x="3" y="891" width="1" height="1"/><rect x="6" y="891" width="1" height="1"/>
<rect x="3" y="894" width="1" height="1"/><rect x="6" y="894" width="1" height="1"/>
<rect x="3" y="897" width="1" height="1"/><rect x="6" y="897" width="1" height="1"/>
<rect x="3" y="900" width="1" height="1"/><rect x="6" y="900" width="1" height="1"/>
<rect x="3" y="903" width="1" height="1"/><rect x="6" y="903" width="1" height="1"/>
<rect x="3" y="906" width="1" height="1"/><rect x="6" y="906" width="1" height="1"/>
<rect x="3" y="909" width="1" height="1"/><rect x="6" y="909" width="1" height="1"/>
<rect x="3" y="912" width="1" height="1"/><rect x="6" y="912" width="1" height="1"/>
<rect x="3" y="915" width="1" height="1"/><rect x="6" y="915" width="1" height="1"/>
<rect x="3" y="918" width="1" height="1"/><rect x="6" y="918" width="1" height="1"/>
<rect x="3" y="921" width="1" height="1"/><rect x="6" y="921" width="1" height="1"/>
<rect x="3" y="924" width="1" height="1"/><rect x="6" y="924" width="1" height="1"/>
<rect x="3" y="927" width="1" height="1"/><rect x="6" y="927" width="1" height="1"/>
<rect x="3" y="930" width="1" height="1"/><rect x="6" y="930" width="1" height="1"/>
<rect x="3" y="933" width="1" height="1"/><rect x="6" y="933" width="1" height="1"/>
<rect x="3" y="936" width="1" height="1"/><rect x="6" y="936" width="1" height="1"/>
</g>
<g fill="#8a8a8a">
<rect x="3" y="946" width="1" height="1"/><rect x="6" y="946" width="1" height="1"/>
<rect x="3" y="949" width="1" height="1"/><rect x="6" y="949" width="1" height="1"/>
<rect x="3" y="952" width="1" height="1"/><rect x="6" y="952" width="1" height="1"/>
<rect x="3" y="955" width="1" height="1"/><rect x="6" y="955" width="1" height="1"/>
<rect x="3" y="958" width="1" height="1"/><rect x="6" y="958" width="1" height="1"/>
<rect x="3" y="961" width="1" height="1"/><rect x="6" y="961" width="1" height="1"/>
<rect x="3" y="964" width="1" height="1"/><rect x="6" y="964" width="1" height="1"/>
<rect x="3" y="967" width="1" height="1"/><rect x="6" y="967" width="1" height="1"/>
<rect x="3" y="970" width="1" height="1"/><rect x="6" y="970" width="1" height="1"/>
<rect x="3" y="973" width="1" height="1"/><rect x="6" y="973" width="1" height="1"/>
<rect x="3" y="976" width="1" height="1"/><rect x="6" y="976" width="1" height="1"/>
</g>
<g fill="#8a8a8a">
<rect x="3" y="985" width="1" height="1"/><rect x="6" y="985" width="1" height="1"/>
<rect x="3" y="988" width="1" height="1"/><rect x="6" y="988" width="1" height="1"/>
<rect x="3" y="991" width="1" height="1"/><rect x="6" y="991" width="1" height="1"/>
<rect x="3" y="994" width="1" height="1"/><rect x="6" y="994" width="1" height="1"/>
<rect x="3" y="997" width="1" height="1"/><rect x="6" y="997" width="1" height="1"/>
<rect x="3" y="1000" width="1" height="1"/><rect x="6" y="1000" width="1" height="1"/>
<rect x="3" y="1003" width="1" height="1"/><rect x="6" y="1003" width="1" height="1"/>
<rect x="3" y="1006" width="1" height="1"/><rect x="6" y="1006" width="1" height="1"/>
<rect x="3" y="1009" width="1" height="1"/><rect x="6" y="1009" width="1" height="1"/>
</g>
<g fill="#8a8a8a">
<rect x="3" y="1018" width="1" height="1"/><rect x="6" y="1018" width="1" height="1"/>
<rect x="3" y="1021" width="1" height="1"/><rect x="6" y="1021" width="1" height="1"/>
<rect x="3" y="1024" width="1" height="1"/><rect x="6" y="1024" width="1" height="1"/>
<rect x="3" y="1027" width="1" height="1"/><rect x="6" y="1027" width="1" height="1"/>
<rect x="3" y="1030" width="1" height="1"/><rect x="6" y="1030" width="1" height="1"/>
<rect x="3" y="1033" width="1" height="1"/><rect x="6" y="1033" width="1" height="1"/>
<rect x="3" y="1036" width="1" height="1"/><rect x="6" y="1036" width="1" height="1"/>
</g>
<text x="76.4" y="892" font-size="12" fill="#848484" text-anchor="start" font-weight="normal" >5</text>
<text x="142.9" y="892" font-size="12" fill="#848484" text-anchor="start" font-weight="normal" >10</text>
<text x="209.4" y="892" font-size="12" fill="#848484" text-anchor="start" font-weight="normal" >15</text>
<text x="275.9" y="892" font-size="12" fill="#848484" text-anchor="start" font-weight="normal" >20</text>
<text x="342.4" y="892" font-size="12" fill="#848484" text-anchor="start" font-weight="normal" >25</text>
<text x="408.9" y="892" font-size="12" fill="#848484" text-anchor="start" font-weight="normal" >30</text>
<text x="475.4" y="892" font-size="12" fill="#848484" text-anchor="start" font-weight="normal" >35</text>
<text x="541.9" y="892" font-size="12" fill="#848484" text-anchor="start" font-weight="normal" >40</text>
<text x="608.4" y="892" font-size="12" fill="#848484" text-anchor="start" font-weight="normal" >45</text>
<text x="674.9" y="892" font-size="12" fill="#848484" text-anchor="start" font-weight="normal" >50</text>
<text x="741.4" y="892" font-size="12" fill="#848484" text-anchor="start" font-weight="normal" >55</text>
<text x="807.9" y="892" font-size="12" fill="#848484" text-anchor="start" font-weight="normal" >60</text>
<text x="874.4" y="892" font-size="12" fill="#848484" text-anchor="start" font-weight="normal" >65</text>
<text x="940.9" y="892" font-size="12" fill="#848484" text-anchor="start" font-weight="normal" >70</text>
<text x="1007.4" y="892" font-size="12" fill="#848484" text-anchor="start" font-weight="normal" >75</text>
<text x="1073.9" y="892" font-size="12" fill="#848484" text-anchor="start" font-weight="normal" >80</text>
<text x="1140.4" y="892" font-size="12" fill="#848484" text-anchor="start" font-weight="normal" >85</text>
<text x="1206.9" y="892" font-size="12" fill="#848484" text-anchor="start" font-weight="normal" >90</text>
<text x="1273.4" y="892" font-size="12" fill="#848484" text-anchor="start" font-weight="normal" >95</text>
<text x="1339.9" y="892" font-size="12" fill="#848484" text-anchor="start" font-weight="normal" >100</text>
<text x="1406.4" y="892" font-size="12" fill="#848484" text-anchor="start" font-weight="normal" >105</text>
<text x="1472.9" y="892" font-size="12" fill="#848484" text-anchor="start" font-weight="normal" >110</text>
<text x="1539.4" y="892" font-size="12" fill="#848484" text-anchor="start" font-weight="normal" >115</text>
<g fill="#8c8c8c"><rect x="74" y="898.500" width="2" height="38.500" /><rect x="140" y="898.500" width="2" height="38.500" /><rect x="207" y="898.500" width="2" height="38.500" /><rect x="273" y="898.500" width="2" height="38.500" /><rect x="340" y="898.500" width="2" height="38.500" /><rect x="406" y="898.500" width="2" height="38.500" /><rect x="473" y="898.500" width="2" height="38.500" /><rect x="539" y="898.500" width="2" height="38.500" /><rect x="606" y="898.500" width="2" height="38.500" /><rect x="672" y="898.500" width="2" height="38.500" /><rect x="739" y="898.500" width="2" height="38.500" /><rect x="805" y="898.500" width="2" height="38.500" /><rect x="872" y="898.500" width="2" height="38.500" /><rect x="938" y="898.500" width="2" height="38.500" /><rect x="1005" y="898.500" width="2" height="38.500" /><rect x="1071" y="898.500" width="2" height="38.500" /><rect x="1138" y="898.500" width="2" height="38.500" /><rect x="1204" y="898.500" width="2" height="38.500" /><rect x="1271" y="898.500" width="2" height="38.500" /><rect x="1337" y="898.500" width="2" height="38.500" /><rect x="1404" y="898.500" width="2" height="38.500" /><rect x="1470" y="898.500" width="2" height="38.500" /><rect x="1537" y="898.500" width="2" height="38.500" /><rect x="1603" y="898.500" width="2" height="38.500" /></g>
<clipPath id="ctl"><rect x="13" y="881" width="1612" height="56"/></clipPath><g clip-path="url(#ctl)"><text x="1606.300" y="892" font-size="12" fill="#848484">120</text></g>
<rect x="1729.9" y="888.7" width="2.4" height="12.5" fill="#c8c8c8" rx="0.500"/>
<path d="M1733.3 895l5.8 -5.3v10.6zM1740.2 895l6 -5.3v10.6z" fill="#c8c8c8" stroke="none" stroke-width="1" />
<rect x="1754.7" y="888.7" width="2.4" height="12.5" fill="#c8c8c8" rx="0.500"/>
<path d="M1758.5 895l8.7 -6v12z" fill="#c8c8c8" stroke="none" stroke-width="1" />
<path d="M1778.500 886v18" fill="none" stroke="#c8c8c8" stroke-width="0.9" />
<rect x="1776.8" y="888.7" width="3.4" height="12.5" fill="#e5853f" rx="0.500"/>
<path d="M1781.5 895l8.8 -6v12z" fill="#c8c8c8" stroke="none" stroke-width="1" />
<path d="M1800.2 895l13 -8.2v16.4z" fill="#c8c8c8" stroke="none" stroke-width="1" />
<path d="M1836.7 895l-12.8 -8.2v16.4z" fill="#c8c8c8" stroke="none" stroke-width="1" />
<path d="M1855.5 895l-8.9 -6v12z" fill="#c8c8c8" stroke="none" stroke-width="1" />
<path d="M1858.700 886v18" fill="none" stroke="#c8c8c8" stroke-width="0.9" />
<rect x="1857" y="888.7" width="3.4" height="12.5" fill="#e5853f" rx="0.500"/>
<path d="M1878.5 895l-8.8 -6v12z" fill="#c8c8c8" stroke="none" stroke-width="1" />
<rect x="1879.9" y="888.7" width="2.4" height="12.5" fill="#c8c8c8" rx="0.500"/>
<path d="M1896.5 895l-6 -5.3v10.6zM1903.5 895l-6 -5.3v10.6z" fill="#c8c8c8" stroke="none" stroke-width="1" />
<rect x="1904.9" y="888.7" width="2.4" height="12.5" fill="#c8c8c8" rx="0.500"/>
<rect x="1414.0" y="951" width="1" height="20" fill="#8a8a8a" />
<rect x="1413.0" y="956" width="3" height="10" fill="#8a8a8a" />
<path d="M1430 959h8.500l-4.250 5z" fill="#444" stroke="#9a9a9a" stroke-width="1" />
<path d="M1559 959h8.500l-4.250 5z" fill="#444" stroke="#9a9a9a" stroke-width="1" />
<rect x="1687.0" y="951" width="1" height="20" fill="#8a8a8a" />
<rect x="1686.0" y="956" width="3" height="10" fill="#8a8a8a" />
<path d="M1790.0 959.0h9l-4.5 5z" fill="#c8c8c8" stroke="none" stroke-width="1" />
<path d="M1821 965.500h-1a4 4 0 0 1 0-8h9" fill="none" stroke="#c8c8c8" stroke-width="1.8" />
<path d="M1828 954l5 3.500-5 3.500z" fill="#c8c8c8" stroke="none" stroke-width="1" />
<path d="M1818 961.500l4.500 4-4.500 4z" fill="#c8c8c8" stroke="none" stroke-width="1" transform="rotate(180 1820.500 965.500)"/>
<circle cx="1831" cy="965.5" r="4.3" fill="#c8c8c8" stroke="#444" stroke-width="0.8" />
<text x="1831" y="968.3" font-size="7.5" fill="#333" text-anchor="middle" font-weight="bold" >1</text>
<rect x="1847.5" y="951" width="1" height="20" fill="#8a8a8a" />
<rect x="1846.5" y="956" width="3" height="10" fill="#8a8a8a" />
<rect x="1859" y="949" width="23" height="25" fill="#d4313b" />
<path d="M1863.500 960a7.300 7.300 0 0 1 13.500-3M1877.500 963a7.300 7.300 0 0 1-13.500 3" fill="none" stroke="#3a3030" stroke-width="2.6" />
<path d="M1863.500 960a7.300 7.300 0 0 1 13.500-3M1877.500 963a7.300 7.300 0 0 1-13.500 3" fill="none" stroke="#d8d4d4" stroke-width="1.3" />
<path d="M1862.300 953.500l1 4 4-1z M1878.700 969.500l-1-4-4 1z" fill="#d8d4d4" stroke="#3a3030" stroke-width="0.5" />
<path d="M1864.800 961.500h3M1872.500 961.500h3" fill="none" stroke="#d8d4d4" stroke-width="1.2" />
<rect x="1868.6" y="956.5" width="2.8" height="9.2" fill="#e5853f" stroke="#3a3030" stroke-width="0.700"/>
<line x1="1897.3" y1="956.3" x2="1899.1" y2="956.3" stroke="#d0d0d0" stroke-width="1.5" />
<line x1="1896.4798989873223" y1="958.2798989873223" x2="1897.752691193458" y2="959.552691193458" stroke="#d0d0d0" stroke-width="1.5" />
<line x1="1894.5" y1="959.0999999999999" x2="1894.5" y2="960.9" stroke="#d0d0d0" stroke-width="1.5" />
<line x1="1892.5201010126777" y1="958.2798989873223" x2="1891.247308806542" y2="959.552691193458" stroke="#d0d0d0" stroke-width="1.5" />
<line x1="1891.7" y1="956.3" x2="1889.9" y2="956.3" stroke="#d0d0d0" stroke-width="1.5" />
<line x1="1892.5201010126777" y1="954.3201010126776" x2="1891.247308806542" y2="953.0473088065419" stroke="#d0d0d0" stroke-width="1.5" />
<line x1="1894.5" y1="953.5" x2="1894.5" y2="951.6999999999999" stroke="#d0d0d0" stroke-width="1.5" />
<line x1="1896.4798989873223" y1="954.3201010126776" x2="1897.752691193458" y2="953.0473088065419" stroke="#d0d0d0" stroke-width="1.5" />
<circle cx="1894.5" cy="956.3" r="2.9" fill="none" stroke="#d0d0d0" stroke-width="1.4" />
<g fill="none" stroke="#e5853f" stroke-width="2.200" stroke-linecap="round" stroke-linejoin="round"><circle cx="1904.500" cy="956.200" r="1.700" fill="#e5853f" stroke="none"/><path d="M1899.500 961.200l3.200-1.200 2.300 1.800 2.600-2.200M1902.300 960.500l-1.300 4.300 3.300 1.800v3M1900.500 965.200l-1.800 2.200-3 -.800"/></g>
<g fill="#8a8a8a"><rect x="512" y="994" width="1" height="1"/><rect x="512" y="997" width="1" height="1"/><rect x="512" y="1000" width="1" height="1"/></g>
<rect x="1893" y="993" width="18.2" height="14" fill="#c8c8c8" />
<rect x="1893" y="988.8" width="18.2" height="3.2" fill="#d8d8d8" />
<path d="M1894 990.400h5.500" fill="none" stroke="#3a3a3a" stroke-width="1.2" stroke-dasharray="1.200 0.800"/>
<text x="1902.100" y="1003" font-size="10.500" font-weight="bold" fill="#333" text-anchor="middle" letter-spacing="0.600" style="text-rendering:geometricPrecision">{;}</text>
</svg>
</body></html>
